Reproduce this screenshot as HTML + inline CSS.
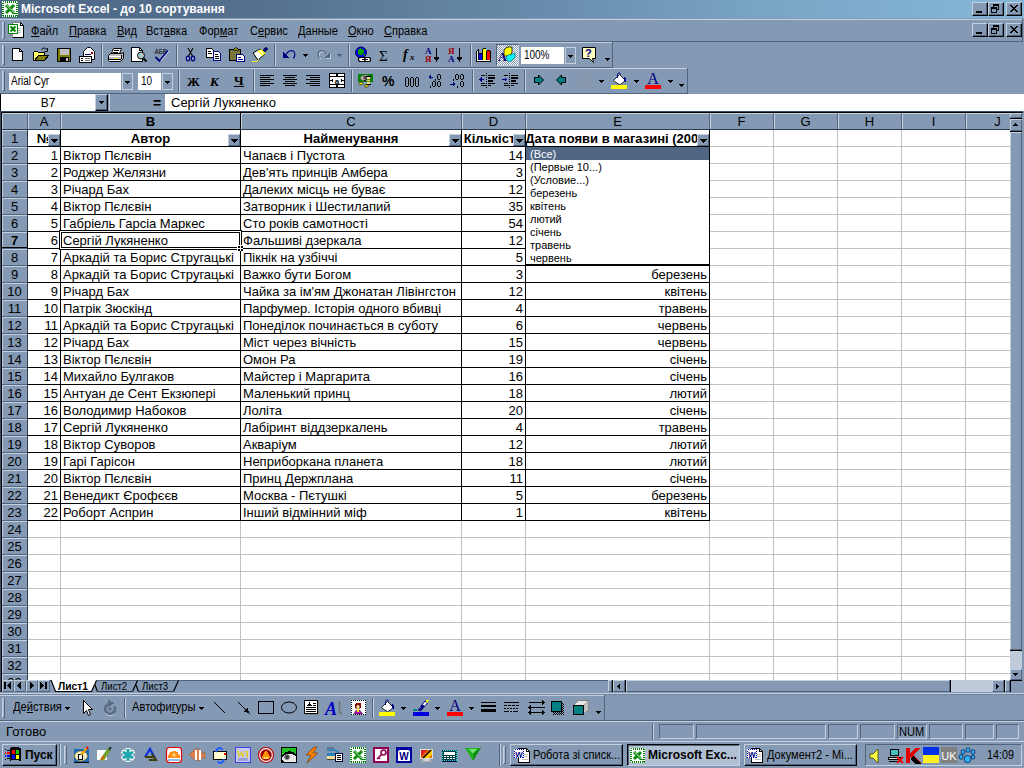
<!DOCTYPE html><html><head><meta charset="utf-8"><title>Microsoft Excel</title><style>
*{box-sizing:border-box;margin:0;padding:0}
html,body{width:1024px;height:768px;overflow:hidden}
body{background:#8499b3;font-family:"Liberation Sans",sans-serif;font-size:13px;color:#000;position:relative;-webkit-font-smoothing:none}
.a{position:absolute}
.t{position:absolute;white-space:nowrap;line-height:1}
.b{font-weight:bold}
.hl{position:absolute;background:#c5d0de}
.sh{position:absolute;background:#52657f}
.bk{position:absolute;background:#000}
.fc{position:absolute;background:#8499b3}
.wh{position:absolute;background:#fff}
.gl{position:absolute;background:#c0c0c0}
.rb{position:absolute;background:#8499b3;border-top:1px solid #c5d0de;border-left:1px solid #c5d0de;border-right:1px solid #52657f;border-bottom:1px solid #52657f}
.sk{position:absolute;border-top:1px solid #52657f;border-left:1px solid #52657f;border-right:1px solid #c5d0de;border-bottom:1px solid #c5d0de}
svg{position:absolute;overflow:visible}
u{text-decoration:underline;text-decoration-thickness:1px;text-underline-offset:1px}
</style></head><body>
<div class="a" style="left:0px;top:0px;width:1024px;height:18px;background:linear-gradient(90deg,#4e6786 0%,#55708f 25%,#6689a8 50%,#7aa5c5 75%,#86b7d8 100%)"></div>
<div class="t" style="top:3px;font-size:12px;left:21px;font-weight:bold;color:#fff;">Microsoft Excel - до 10 сортування</div>
<div class="a" style="left:972px;top:2px;width:16px;height:14px;background:#8499b3;border-top:1px solid #c5d0de;border-left:1px solid #c5d0de;border-right:1px solid #000;border-bottom:1px solid #000"></div>
<div class="sh" style="left:986px;top:3px;width:1px;height:12px;"></div>
<div class="sh" style="left:973px;top:14px;width:14px;height:1px;"></div>
<div class="bk" style="left:976px;top:11px;width:6px;height:2px;"></div>
<div class="a" style="left:988px;top:2px;width:16px;height:14px;background:#8499b3;border-top:1px solid #c5d0de;border-left:1px solid #c5d0de;border-right:1px solid #000;border-bottom:1px solid #000"></div>
<div class="sh" style="left:1002px;top:3px;width:1px;height:12px;"></div>
<div class="sh" style="left:989px;top:14px;width:14px;height:1px;"></div>
<svg style="left:988px;top:2px" width="16" height="14" shape-rendering="crispEdges"><path d="M5 2h6v2h-6zM5 4h1v2h-1zM10 4h1v4h-1zM9 7h1v1h-1zM3 5h6v2h-6zM3 7h1v4h-1zM8 7h1v4h-1zM3 10h6v1h-6z" fill="#000"/></svg>
<div class="a" style="left:1006px;top:2px;width:16px;height:14px;background:#8499b3;border-top:1px solid #c5d0de;border-left:1px solid #c5d0de;border-right:1px solid #000;border-bottom:1px solid #000"></div>
<div class="sh" style="left:1020px;top:3px;width:1px;height:12px;"></div>
<div class="sh" style="left:1007px;top:14px;width:14px;height:1px;"></div>
<svg style="left:1006px;top:2px" width="16" height="14" shape-rendering="crispEdges"><path d="M4 3h2v1h-2zM10 3h2v1h-2zM5 4h2v1h-2zM9 4h2v1h-2zM6 5h4v1h-4zM7 6h2v1h-2zM6 7h4v1h-4zM5 8h2v1h-2zM9 8h2v1h-2zM4 9h2v1h-2zM10 9h2v1h-2z" fill="#000"/></svg>
<div class="hl" style="left:0px;top:19px;width:1022px;height:1px;"></div>
<div class="sh" style="left:0px;top:41px;width:1023px;height:1px;"></div>
<div class="sh" style="left:1022px;top:19px;width:1px;height:23px;"></div>
<div class="hl" style="left:2px;top:22px;width:1px;height:17px;"></div>
<div class="a" style="left:3px;top:22px;width:1px;height:17px;background:#a9b8cd"></div>
<div class="hl" style="left:2px;top:22px;width:2px;height:1px;"></div>
<div class="sh" style="left:4px;top:22px;width:1px;height:17px;"></div>
<div class="sh" style="left:3px;top:38px;width:2px;height:1px;"></div>
<div class="t" style="top:25px;font-size:12px;left:31px;transform:scaleX(.92);transform-origin:0 0;"><u>Ф</u>айл</div>
<div class="t" style="top:25px;font-size:12px;left:69px;transform:scaleX(.92);transform-origin:0 0;"><u>П</u>равка</div>
<div class="t" style="top:25px;font-size:12px;left:117px;transform:scaleX(.92);transform-origin:0 0;"><u>В</u>ид</div>
<div class="t" style="top:25px;font-size:12px;left:146px;transform:scaleX(.92);transform-origin:0 0;">Вст<u>а</u>вка</div>
<div class="t" style="top:25px;font-size:12px;left:199px;transform:scaleX(.92);transform-origin:0 0;">Фор<u>м</u>ат</div>
<div class="t" style="top:25px;font-size:12px;left:250px;transform:scaleX(.92);transform-origin:0 0;">С<u>е</u>рвис</div>
<div class="t" style="top:25px;font-size:12px;left:298px;transform:scaleX(.92);transform-origin:0 0;"><u>Д</u>анные</div>
<div class="t" style="top:25px;font-size:12px;left:348px;transform:scaleX(.92);transform-origin:0 0;"><u>О</u>кно</div>
<div class="t" style="top:25px;font-size:12px;left:384px;transform:scaleX(.92);transform-origin:0 0;"><u>С</u>правка</div>
<div class="a" style="left:972px;top:23px;width:16px;height:14px;background:#8499b3;border-top:1px solid #c5d0de;border-left:1px solid #c5d0de;border-right:1px solid #000;border-bottom:1px solid #000"></div>
<div class="sh" style="left:986px;top:24px;width:1px;height:12px;"></div>
<div class="sh" style="left:973px;top:35px;width:14px;height:1px;"></div>
<div class="bk" style="left:976px;top:32px;width:6px;height:2px;"></div>
<div class="a" style="left:988px;top:23px;width:16px;height:14px;background:#8499b3;border-top:1px solid #c5d0de;border-left:1px solid #c5d0de;border-right:1px solid #000;border-bottom:1px solid #000"></div>
<div class="sh" style="left:1002px;top:24px;width:1px;height:12px;"></div>
<div class="sh" style="left:989px;top:35px;width:14px;height:1px;"></div>
<svg style="left:988px;top:23px" width="16" height="14" shape-rendering="crispEdges"><path d="M5 2h6v2h-6zM5 4h1v2h-1zM10 4h1v4h-1zM9 7h1v1h-1zM3 5h6v2h-6zM3 7h1v4h-1zM8 7h1v4h-1zM3 10h6v1h-6z" fill="#000"/></svg>
<div class="a" style="left:1006px;top:23px;width:16px;height:14px;background:#8499b3;border-top:1px solid #c5d0de;border-left:1px solid #c5d0de;border-right:1px solid #000;border-bottom:1px solid #000"></div>
<div class="sh" style="left:1020px;top:24px;width:1px;height:12px;"></div>
<div class="sh" style="left:1007px;top:35px;width:14px;height:1px;"></div>
<svg style="left:1006px;top:23px" width="16" height="14" shape-rendering="crispEdges"><path d="M4 3h2v1h-2zM10 3h2v1h-2zM5 4h2v1h-2zM9 4h2v1h-2zM6 5h4v1h-4zM7 6h2v1h-2zM6 7h4v1h-4zM5 8h2v1h-2zM9 8h2v1h-2zM4 9h2v1h-2zM10 9h2v1h-2z" fill="#000"/></svg>
<div class="hl" style="left:0px;top:42px;width:612px;height:1px;"></div>
<div class="sh" style="left:0px;top:67px;width:613px;height:1px;"></div>
<div class="sh" style="left:612px;top:42px;width:1px;height:26px;"></div>
<div class="hl" style="left:2px;top:45px;width:1px;height:20px;"></div>
<div class="a" style="left:3px;top:45px;width:1px;height:20px;background:#a9b8cd"></div>
<div class="hl" style="left:2px;top:45px;width:2px;height:1px;"></div>
<div class="sh" style="left:4px;top:45px;width:1px;height:20px;"></div>
<div class="sh" style="left:3px;top:64px;width:2px;height:1px;"></div>
<div class="sh" style="left:101px;top:44px;width:1px;height:22px;"></div>
<div class="hl" style="left:102px;top:44px;width:1px;height:22px;"></div>
<div class="sh" style="left:176px;top:44px;width:1px;height:22px;"></div>
<div class="hl" style="left:177px;top:44px;width:1px;height:22px;"></div>
<div class="sh" style="left:274px;top:44px;width:1px;height:22px;"></div>
<div class="hl" style="left:275px;top:44px;width:1px;height:22px;"></div>
<div class="sh" style="left:348px;top:44px;width:1px;height:22px;"></div>
<div class="hl" style="left:349px;top:44px;width:1px;height:22px;"></div>
<div class="sh" style="left:470px;top:44px;width:1px;height:22px;"></div>
<div class="hl" style="left:471px;top:44px;width:1px;height:22px;"></div>
<div class="wh" style="left:521px;top:47px;width:43px;height:17px;"></div>
<div class="t" style="top:49px;font-size:12px;left:524px;transform:scaleX(.83);transform-origin:0 0;">100%</div>
<div class="a" style="left:565px;top:47px;width:11px;height:17px;border:1px solid #c5d0de"></div>
<div class="a" style="left:568px;top:55px;width:5px;height:1px;background:#000"></div>
<div class="a" style="left:569px;top:56px;width:3px;height:1px;background:#000"></div>
<div class="a" style="left:570px;top:57px;width:1px;height:1px;background:#000"></div>
<div class="a" style="left:605px;top:58px;width:5px;height:1px;background:#000"></div>
<div class="a" style="left:606px;top:59px;width:3px;height:1px;background:#000"></div>
<div class="a" style="left:607px;top:60px;width:1px;height:1px;background:#000"></div>
<div class="a" style="left:303px;top:54px;width:5px;height:1px;background:#000"></div>
<div class="a" style="left:304px;top:55px;width:3px;height:1px;background:#000"></div>
<div class="a" style="left:305px;top:56px;width:1px;height:1px;background:#000"></div>
<div class="a" style="left:337px;top:54px;width:5px;height:1px;background:#52657f"></div>
<div class="a" style="left:338px;top:55px;width:3px;height:1px;background:#52657f"></div>
<div class="a" style="left:339px;top:56px;width:1px;height:1px;background:#52657f"></div>
<div class="a" style="left:496px;top:44px;width:23px;height:22px;background:repeating-conic-gradient(#ffffff 0 25%,#8499b3 0 50%) 0 0/2px 2px;border-top:1px solid #52657f;border-left:1px solid #52657f;border-right:1px solid #c5d0de;border-bottom:1px solid #c5d0de"></div>
<div class="hl" style="left:0px;top:68px;width:687px;height:1px;"></div>
<div class="sh" style="left:0px;top:93px;width:688px;height:1px;"></div>
<div class="sh" style="left:687px;top:68px;width:1px;height:26px;"></div>
<div class="hl" style="left:2px;top:71px;width:1px;height:20px;"></div>
<div class="a" style="left:3px;top:71px;width:1px;height:20px;background:#a9b8cd"></div>
<div class="hl" style="left:2px;top:71px;width:2px;height:1px;"></div>
<div class="sh" style="left:4px;top:71px;width:1px;height:20px;"></div>
<div class="sh" style="left:3px;top:90px;width:2px;height:1px;"></div>
<div class="wh" style="left:9px;top:73px;width:112px;height:17px;"></div>
<div class="t" style="top:75px;font-size:12px;left:11px;transform:scaleX(.83);transform-origin:0 0;">Arial Cyr</div>
<div class="a" style="left:122px;top:73px;width:11px;height:17px;border:1px solid #c5d0de"></div>
<div class="a" style="left:125px;top:81px;width:5px;height:1px;background:#000"></div>
<div class="a" style="left:126px;top:82px;width:3px;height:1px;background:#000"></div>
<div class="a" style="left:127px;top:83px;width:1px;height:1px;background:#000"></div>
<div class="wh" style="left:138px;top:73px;width:23px;height:17px;"></div>
<div class="t" style="top:75px;font-size:12px;left:141px;transform:scaleX(.83);transform-origin:0 0;">10</div>
<div class="a" style="left:162px;top:73px;width:11px;height:17px;border:1px solid #c5d0de"></div>
<div class="a" style="left:165px;top:81px;width:5px;height:1px;background:#000"></div>
<div class="a" style="left:166px;top:82px;width:3px;height:1px;background:#000"></div>
<div class="a" style="left:167px;top:83px;width:1px;height:1px;background:#000"></div>
<div class="sh" style="left:178px;top:70px;width:1px;height:22px;"></div>
<div class="hl" style="left:179px;top:70px;width:1px;height:22px;"></div>
<div class="sh" style="left:253px;top:70px;width:1px;height:22px;"></div>
<div class="hl" style="left:254px;top:70px;width:1px;height:22px;"></div>
<div class="sh" style="left:351px;top:70px;width:1px;height:22px;"></div>
<div class="hl" style="left:352px;top:70px;width:1px;height:22px;"></div>
<div class="sh" style="left:472px;top:70px;width:1px;height:22px;"></div>
<div class="hl" style="left:473px;top:70px;width:1px;height:22px;"></div>
<div class="sh" style="left:524px;top:70px;width:1px;height:22px;"></div>
<div class="hl" style="left:525px;top:70px;width:1px;height:22px;"></div>
<div class="a" style="left:599px;top:80px;width:5px;height:1px;background:#000"></div>
<div class="a" style="left:600px;top:81px;width:3px;height:1px;background:#000"></div>
<div class="a" style="left:601px;top:82px;width:1px;height:1px;background:#000"></div>
<div class="a" style="left:634px;top:80px;width:5px;height:1px;background:#000"></div>
<div class="a" style="left:635px;top:81px;width:3px;height:1px;background:#000"></div>
<div class="a" style="left:636px;top:82px;width:1px;height:1px;background:#000"></div>
<div class="a" style="left:668px;top:80px;width:5px;height:1px;background:#000"></div>
<div class="a" style="left:669px;top:81px;width:3px;height:1px;background:#000"></div>
<div class="a" style="left:670px;top:82px;width:1px;height:1px;background:#000"></div>
<div class="a" style="left:679px;top:84px;width:5px;height:1px;background:#000"></div>
<div class="a" style="left:680px;top:85px;width:3px;height:1px;background:#000"></div>
<div class="a" style="left:681px;top:86px;width:1px;height:1px;background:#000"></div>
<div class="wh" style="left:0px;top:94px;width:95px;height:17px;"></div>
<div class="bk" style="left:0px;top:94px;width:1px;height:17px;"></div>
<div class="t" style="left:18px;width:60px;top:97px;font-size:12px;text-align:center;">B7</div>
<div class="a" style="left:95px;top:94px;width:13px;height:17px;background:#8499b3;border-top:1px solid #c5d0de;border-left:1px solid #c5d0de;border-right:1px solid #000;border-bottom:1px solid #000"></div>
<div class="sh" style="left:106px;top:95px;width:1px;height:15px;"></div>
<div class="sh" style="left:96px;top:109px;width:11px;height:1px;"></div>
<div class="a" style="left:99px;top:101px;width:5px;height:1px;background:#000"></div>
<div class="a" style="left:100px;top:102px;width:3px;height:1px;background:#000"></div>
<div class="a" style="left:101px;top:103px;width:1px;height:1px;background:#000"></div>
<div class="hl" style="left:109px;top:94px;width:1px;height:17px;"></div>
<div class="t" style="top:96px;font-size:14px;left:153px;font-weight:bold;">=</div>
<div class="wh" style="left:165px;top:94px;width:859px;height:17px;"></div>
<div class="t" style="top:96px;font-size:13px;left:171px;">Сергій Лукяненко</div>
<div class="wh" style="left:28px;top:130px;width:982px;height:550px;"></div>
<div class="gl" style="left:28px;top:146px;width:982px;height:1px;"></div>
<div class="gl" style="left:28px;top:163px;width:982px;height:1px;"></div>
<div class="gl" style="left:28px;top:180px;width:982px;height:1px;"></div>
<div class="gl" style="left:28px;top:197px;width:982px;height:1px;"></div>
<div class="gl" style="left:28px;top:214px;width:982px;height:1px;"></div>
<div class="gl" style="left:28px;top:231px;width:982px;height:1px;"></div>
<div class="gl" style="left:28px;top:248px;width:982px;height:1px;"></div>
<div class="gl" style="left:28px;top:265px;width:982px;height:1px;"></div>
<div class="gl" style="left:28px;top:282px;width:982px;height:1px;"></div>
<div class="gl" style="left:28px;top:299px;width:982px;height:1px;"></div>
<div class="gl" style="left:28px;top:316px;width:982px;height:1px;"></div>
<div class="gl" style="left:28px;top:333px;width:982px;height:1px;"></div>
<div class="gl" style="left:28px;top:350px;width:982px;height:1px;"></div>
<div class="gl" style="left:28px;top:367px;width:982px;height:1px;"></div>
<div class="gl" style="left:28px;top:384px;width:982px;height:1px;"></div>
<div class="gl" style="left:28px;top:401px;width:982px;height:1px;"></div>
<div class="gl" style="left:28px;top:418px;width:982px;height:1px;"></div>
<div class="gl" style="left:28px;top:435px;width:982px;height:1px;"></div>
<div class="gl" style="left:28px;top:452px;width:982px;height:1px;"></div>
<div class="gl" style="left:28px;top:469px;width:982px;height:1px;"></div>
<div class="gl" style="left:28px;top:486px;width:982px;height:1px;"></div>
<div class="gl" style="left:28px;top:503px;width:982px;height:1px;"></div>
<div class="gl" style="left:28px;top:520px;width:982px;height:1px;"></div>
<div class="gl" style="left:28px;top:537px;width:982px;height:1px;"></div>
<div class="gl" style="left:28px;top:554px;width:982px;height:1px;"></div>
<div class="gl" style="left:28px;top:571px;width:982px;height:1px;"></div>
<div class="gl" style="left:28px;top:588px;width:982px;height:1px;"></div>
<div class="gl" style="left:28px;top:605px;width:982px;height:1px;"></div>
<div class="gl" style="left:28px;top:622px;width:982px;height:1px;"></div>
<div class="gl" style="left:28px;top:639px;width:982px;height:1px;"></div>
<div class="gl" style="left:28px;top:656px;width:982px;height:1px;"></div>
<div class="gl" style="left:28px;top:673px;width:982px;height:1px;"></div>
<div class="gl" style="left:60px;top:130px;width:1px;height:550px;"></div>
<div class="gl" style="left:240px;top:130px;width:1px;height:550px;"></div>
<div class="gl" style="left:461px;top:130px;width:1px;height:550px;"></div>
<div class="gl" style="left:525px;top:130px;width:1px;height:550px;"></div>
<div class="gl" style="left:709px;top:130px;width:1px;height:550px;"></div>
<div class="gl" style="left:773px;top:130px;width:1px;height:550px;"></div>
<div class="gl" style="left:837px;top:130px;width:1px;height:550px;"></div>
<div class="gl" style="left:901px;top:130px;width:1px;height:550px;"></div>
<div class="gl" style="left:965px;top:130px;width:1px;height:550px;"></div>
<div class="a" style="left:0px;top:111px;width:1023px;height:1px;background:#3d4c63"></div>
<div class="bk" style="left:0px;top:112px;width:1023px;height:1px;"></div>
<div class="a" style="left:0px;top:111px;width:1px;height:581px;background:#3d4c63"></div>
<div class="bk" style="left:1px;top:112px;width:1px;height:580px;"></div>
<div class="fc" style="left:2px;top:113px;width:1008px;height:16px;"></div>
<div class="hl" style="left:2px;top:113px;width:1008px;height:1px;"></div>
<div class="a" style="left:2px;top:129px;width:1008px;height:1px;background:#2c3a50"></div>
<div class="hl" style="left:2px;top:113px;width:1px;height:16px;"></div>
<div class="sh" style="left:27px;top:113px;width:1px;height:16px;"></div>
<div class="hl" style="left:28px;top:113px;width:1px;height:16px;"></div>
<div class="sh" style="left:60px;top:113px;width:1px;height:16px;"></div>
<div class="t" style="left:28px;width:32px;top:115px;font-size:13px;text-align:center;">A</div>
<div class="hl" style="left:61px;top:113px;width:1px;height:16px;"></div>
<div class="sh" style="left:240px;top:113px;width:1px;height:16px;"></div>
<div class="t" style="left:61px;width:179px;top:115px;font-size:13px;text-align:center;font-weight:bold;">B</div>
<div class="hl" style="left:241px;top:113px;width:1px;height:16px;"></div>
<div class="sh" style="left:461px;top:113px;width:1px;height:16px;"></div>
<div class="t" style="left:241px;width:220px;top:115px;font-size:13px;text-align:center;">C</div>
<div class="hl" style="left:462px;top:113px;width:1px;height:16px;"></div>
<div class="sh" style="left:525px;top:113px;width:1px;height:16px;"></div>
<div class="t" style="left:462px;width:63px;top:115px;font-size:13px;text-align:center;">D</div>
<div class="hl" style="left:526px;top:113px;width:1px;height:16px;"></div>
<div class="sh" style="left:709px;top:113px;width:1px;height:16px;"></div>
<div class="t" style="left:526px;width:183px;top:115px;font-size:13px;text-align:center;">E</div>
<div class="hl" style="left:710px;top:113px;width:1px;height:16px;"></div>
<div class="sh" style="left:773px;top:113px;width:1px;height:16px;"></div>
<div class="t" style="left:710px;width:63px;top:115px;font-size:13px;text-align:center;">F</div>
<div class="hl" style="left:774px;top:113px;width:1px;height:16px;"></div>
<div class="sh" style="left:837px;top:113px;width:1px;height:16px;"></div>
<div class="t" style="left:774px;width:63px;top:115px;font-size:13px;text-align:center;">G</div>
<div class="hl" style="left:838px;top:113px;width:1px;height:16px;"></div>
<div class="sh" style="left:901px;top:113px;width:1px;height:16px;"></div>
<div class="t" style="left:838px;width:63px;top:115px;font-size:13px;text-align:center;">H</div>
<div class="hl" style="left:902px;top:113px;width:1px;height:16px;"></div>
<div class="sh" style="left:965px;top:113px;width:1px;height:16px;"></div>
<div class="t" style="left:902px;width:63px;top:115px;font-size:13px;text-align:center;">I</div>
<div class="hl" style="left:966px;top:113px;width:1px;height:16px;"></div>
<div class="t" style="left:966px;width:63px;top:115px;font-size:13px;text-align:center;">J</div>
<div class="fc" style="left:2px;top:130px;width:25px;height:550px;"></div>
<div class="hl" style="left:2px;top:130px;width:1px;height:550px;"></div>
<div class="a" style="left:27px;top:130px;width:1px;height:550px;background:#2c3a50"></div>
<div class="hl" style="left:2px;top:130px;width:25px;height:1px;"></div>
<div class="sh" style="left:2px;top:146px;width:26px;height:1px;"></div>
<div class="t" style="left:2px;width:25px;top:132px;height:14px;overflow:hidden;text-align:center;font-size:13px;">1</div>
<div class="hl" style="left:2px;top:147px;width:25px;height:1px;"></div>
<div class="sh" style="left:2px;top:163px;width:26px;height:1px;"></div>
<div class="t" style="left:2px;width:25px;top:149px;height:14px;overflow:hidden;text-align:center;font-size:13px;">2</div>
<div class="hl" style="left:2px;top:164px;width:25px;height:1px;"></div>
<div class="sh" style="left:2px;top:180px;width:26px;height:1px;"></div>
<div class="t" style="left:2px;width:25px;top:166px;height:14px;overflow:hidden;text-align:center;font-size:13px;">3</div>
<div class="hl" style="left:2px;top:181px;width:25px;height:1px;"></div>
<div class="sh" style="left:2px;top:197px;width:26px;height:1px;"></div>
<div class="t" style="left:2px;width:25px;top:183px;height:14px;overflow:hidden;text-align:center;font-size:13px;">4</div>
<div class="hl" style="left:2px;top:198px;width:25px;height:1px;"></div>
<div class="sh" style="left:2px;top:214px;width:26px;height:1px;"></div>
<div class="t" style="left:2px;width:25px;top:200px;height:14px;overflow:hidden;text-align:center;font-size:13px;">5</div>
<div class="hl" style="left:2px;top:215px;width:25px;height:1px;"></div>
<div class="sh" style="left:2px;top:231px;width:26px;height:1px;"></div>
<div class="t" style="left:2px;width:25px;top:217px;height:14px;overflow:hidden;text-align:center;font-size:13px;">6</div>
<div class="hl" style="left:2px;top:232px;width:25px;height:1px;"></div>
<div class="sh" style="left:2px;top:248px;width:26px;height:1px;"></div>
<div class="t" style="left:2px;width:25px;top:234px;height:14px;overflow:hidden;text-align:center;font-size:13px;font-weight:bold;">7</div>
<div class="hl" style="left:2px;top:249px;width:25px;height:1px;"></div>
<div class="sh" style="left:2px;top:265px;width:26px;height:1px;"></div>
<div class="t" style="left:2px;width:25px;top:251px;height:14px;overflow:hidden;text-align:center;font-size:13px;">8</div>
<div class="hl" style="left:2px;top:266px;width:25px;height:1px;"></div>
<div class="sh" style="left:2px;top:282px;width:26px;height:1px;"></div>
<div class="t" style="left:2px;width:25px;top:268px;height:14px;overflow:hidden;text-align:center;font-size:13px;">9</div>
<div class="hl" style="left:2px;top:283px;width:25px;height:1px;"></div>
<div class="sh" style="left:2px;top:299px;width:26px;height:1px;"></div>
<div class="t" style="left:2px;width:25px;top:285px;height:14px;overflow:hidden;text-align:center;font-size:13px;">10</div>
<div class="hl" style="left:2px;top:300px;width:25px;height:1px;"></div>
<div class="sh" style="left:2px;top:316px;width:26px;height:1px;"></div>
<div class="t" style="left:2px;width:25px;top:302px;height:14px;overflow:hidden;text-align:center;font-size:13px;">11</div>
<div class="hl" style="left:2px;top:317px;width:25px;height:1px;"></div>
<div class="sh" style="left:2px;top:333px;width:26px;height:1px;"></div>
<div class="t" style="left:2px;width:25px;top:319px;height:14px;overflow:hidden;text-align:center;font-size:13px;">12</div>
<div class="hl" style="left:2px;top:334px;width:25px;height:1px;"></div>
<div class="sh" style="left:2px;top:350px;width:26px;height:1px;"></div>
<div class="t" style="left:2px;width:25px;top:336px;height:14px;overflow:hidden;text-align:center;font-size:13px;">13</div>
<div class="hl" style="left:2px;top:351px;width:25px;height:1px;"></div>
<div class="sh" style="left:2px;top:367px;width:26px;height:1px;"></div>
<div class="t" style="left:2px;width:25px;top:353px;height:14px;overflow:hidden;text-align:center;font-size:13px;">14</div>
<div class="hl" style="left:2px;top:368px;width:25px;height:1px;"></div>
<div class="sh" style="left:2px;top:384px;width:26px;height:1px;"></div>
<div class="t" style="left:2px;width:25px;top:370px;height:14px;overflow:hidden;text-align:center;font-size:13px;">15</div>
<div class="hl" style="left:2px;top:385px;width:25px;height:1px;"></div>
<div class="sh" style="left:2px;top:401px;width:26px;height:1px;"></div>
<div class="t" style="left:2px;width:25px;top:387px;height:14px;overflow:hidden;text-align:center;font-size:13px;">16</div>
<div class="hl" style="left:2px;top:402px;width:25px;height:1px;"></div>
<div class="sh" style="left:2px;top:418px;width:26px;height:1px;"></div>
<div class="t" style="left:2px;width:25px;top:404px;height:14px;overflow:hidden;text-align:center;font-size:13px;">17</div>
<div class="hl" style="left:2px;top:419px;width:25px;height:1px;"></div>
<div class="sh" style="left:2px;top:435px;width:26px;height:1px;"></div>
<div class="t" style="left:2px;width:25px;top:421px;height:14px;overflow:hidden;text-align:center;font-size:13px;">18</div>
<div class="hl" style="left:2px;top:436px;width:25px;height:1px;"></div>
<div class="sh" style="left:2px;top:452px;width:26px;height:1px;"></div>
<div class="t" style="left:2px;width:25px;top:438px;height:14px;overflow:hidden;text-align:center;font-size:13px;">19</div>
<div class="hl" style="left:2px;top:453px;width:25px;height:1px;"></div>
<div class="sh" style="left:2px;top:469px;width:26px;height:1px;"></div>
<div class="t" style="left:2px;width:25px;top:455px;height:14px;overflow:hidden;text-align:center;font-size:13px;">20</div>
<div class="hl" style="left:2px;top:470px;width:25px;height:1px;"></div>
<div class="sh" style="left:2px;top:486px;width:26px;height:1px;"></div>
<div class="t" style="left:2px;width:25px;top:472px;height:14px;overflow:hidden;text-align:center;font-size:13px;">21</div>
<div class="hl" style="left:2px;top:487px;width:25px;height:1px;"></div>
<div class="sh" style="left:2px;top:503px;width:26px;height:1px;"></div>
<div class="t" style="left:2px;width:25px;top:489px;height:14px;overflow:hidden;text-align:center;font-size:13px;">22</div>
<div class="hl" style="left:2px;top:504px;width:25px;height:1px;"></div>
<div class="sh" style="left:2px;top:520px;width:26px;height:1px;"></div>
<div class="t" style="left:2px;width:25px;top:506px;height:14px;overflow:hidden;text-align:center;font-size:13px;">23</div>
<div class="hl" style="left:2px;top:521px;width:25px;height:1px;"></div>
<div class="sh" style="left:2px;top:537px;width:26px;height:1px;"></div>
<div class="t" style="left:2px;width:25px;top:523px;height:14px;overflow:hidden;text-align:center;font-size:13px;">24</div>
<div class="hl" style="left:2px;top:538px;width:25px;height:1px;"></div>
<div class="sh" style="left:2px;top:554px;width:26px;height:1px;"></div>
<div class="t" style="left:2px;width:25px;top:540px;height:14px;overflow:hidden;text-align:center;font-size:13px;">25</div>
<div class="hl" style="left:2px;top:555px;width:25px;height:1px;"></div>
<div class="sh" style="left:2px;top:571px;width:26px;height:1px;"></div>
<div class="t" style="left:2px;width:25px;top:557px;height:14px;overflow:hidden;text-align:center;font-size:13px;">26</div>
<div class="hl" style="left:2px;top:572px;width:25px;height:1px;"></div>
<div class="sh" style="left:2px;top:588px;width:26px;height:1px;"></div>
<div class="t" style="left:2px;width:25px;top:574px;height:14px;overflow:hidden;text-align:center;font-size:13px;">27</div>
<div class="hl" style="left:2px;top:589px;width:25px;height:1px;"></div>
<div class="sh" style="left:2px;top:605px;width:26px;height:1px;"></div>
<div class="t" style="left:2px;width:25px;top:591px;height:14px;overflow:hidden;text-align:center;font-size:13px;">28</div>
<div class="hl" style="left:2px;top:606px;width:25px;height:1px;"></div>
<div class="sh" style="left:2px;top:622px;width:26px;height:1px;"></div>
<div class="t" style="left:2px;width:25px;top:608px;height:14px;overflow:hidden;text-align:center;font-size:13px;">29</div>
<div class="hl" style="left:2px;top:623px;width:25px;height:1px;"></div>
<div class="sh" style="left:2px;top:639px;width:26px;height:1px;"></div>
<div class="t" style="left:2px;width:25px;top:625px;height:14px;overflow:hidden;text-align:center;font-size:13px;">30</div>
<div class="hl" style="left:2px;top:640px;width:25px;height:1px;"></div>
<div class="sh" style="left:2px;top:656px;width:26px;height:1px;"></div>
<div class="t" style="left:2px;width:25px;top:642px;height:14px;overflow:hidden;text-align:center;font-size:13px;">31</div>
<div class="hl" style="left:2px;top:657px;width:25px;height:1px;"></div>
<div class="sh" style="left:2px;top:673px;width:26px;height:1px;"></div>
<div class="t" style="left:2px;width:25px;top:659px;height:14px;overflow:hidden;text-align:center;font-size:13px;">32</div>
<div class="hl" style="left:2px;top:674px;width:25px;height:1px;"></div>
<div class="t" style="left:2px;width:25px;top:676px;height:4px;overflow:hidden;text-align:center;font-size:13px;">33</div>
<div class="bk" style="left:27px;top:146px;width:683px;height:1px;"></div>
<div class="bk" style="left:27px;top:163px;width:683px;height:1px;"></div>
<div class="bk" style="left:27px;top:180px;width:683px;height:1px;"></div>
<div class="bk" style="left:27px;top:197px;width:683px;height:1px;"></div>
<div class="bk" style="left:27px;top:214px;width:683px;height:1px;"></div>
<div class="bk" style="left:27px;top:231px;width:683px;height:1px;"></div>
<div class="bk" style="left:27px;top:248px;width:683px;height:1px;"></div>
<div class="bk" style="left:27px;top:265px;width:683px;height:1px;"></div>
<div class="bk" style="left:27px;top:282px;width:683px;height:1px;"></div>
<div class="bk" style="left:27px;top:299px;width:683px;height:1px;"></div>
<div class="bk" style="left:27px;top:316px;width:683px;height:1px;"></div>
<div class="bk" style="left:27px;top:333px;width:683px;height:1px;"></div>
<div class="bk" style="left:27px;top:350px;width:683px;height:1px;"></div>
<div class="bk" style="left:27px;top:367px;width:683px;height:1px;"></div>
<div class="bk" style="left:27px;top:384px;width:683px;height:1px;"></div>
<div class="bk" style="left:27px;top:401px;width:683px;height:1px;"></div>
<div class="bk" style="left:27px;top:418px;width:683px;height:1px;"></div>
<div class="bk" style="left:27px;top:435px;width:683px;height:1px;"></div>
<div class="bk" style="left:27px;top:452px;width:683px;height:1px;"></div>
<div class="bk" style="left:27px;top:469px;width:683px;height:1px;"></div>
<div class="bk" style="left:27px;top:486px;width:683px;height:1px;"></div>
<div class="bk" style="left:27px;top:503px;width:683px;height:1px;"></div>
<div class="bk" style="left:27px;top:520px;width:683px;height:1px;"></div>
<div class="bk" style="left:61px;top:129px;width:180px;height:1px;"></div>
<div class="bk" style="left:240px;top:113px;width:1px;height:17px;"></div>
<div class="bk" style="left:27px;top:231px;width:1px;height:17px;"></div>
<div class="bk" style="left:2px;top:247px;width:26px;height:1px;"></div>
<div class="bk" style="left:60px;top:130px;width:1px;height:391px;"></div>
<div class="bk" style="left:240px;top:130px;width:1px;height:391px;"></div>
<div class="bk" style="left:461px;top:130px;width:1px;height:391px;"></div>
<div class="bk" style="left:525px;top:130px;width:1px;height:391px;"></div>
<div class="bk" style="left:709px;top:130px;width:1px;height:391px;"></div>
<div class="a" style="left:28px;top:130px;width:32px;height:16px;overflow:hidden;"><div class="ct" style="position:absolute;top:2px;white-space:nowrap;line-height:1;font-size:13px;font-weight:bold;left:50%;transform:translateX(-50%);">№</div></div>
<div class="a" style="left:61px;top:130px;width:179px;height:16px;overflow:hidden;"><div class="ct" style="position:absolute;top:2px;white-space:nowrap;line-height:1;font-size:13px;font-weight:bold;left:50%;transform:translateX(-50%);">Автор</div></div>
<div class="a" style="left:241px;top:130px;width:220px;height:16px;overflow:hidden;"><div class="ct" style="position:absolute;top:2px;white-space:nowrap;line-height:1;font-size:13px;font-weight:bold;left:50%;transform:translateX(-50%);">Найменування</div></div>
<div class="a" style="left:462px;top:130px;width:63px;height:16px;overflow:hidden;"><div class="ct" style="position:absolute;top:2px;white-space:nowrap;line-height:1;font-size:13px;font-weight:bold;left:50%;transform:translateX(-50%);">Кількість</div></div>
<div class="a" style="left:526px;top:130px;width:183px;height:16px;overflow:hidden;"><div class="ct" style="position:absolute;top:2px;white-space:nowrap;line-height:1;font-size:13px;font-weight:bold;left:50%;transform:translateX(-50%);">Дата появи в магазині (2005)</div></div>
<div class="a" style="left:48px;top:134px;width:12px;height:12px;background:#8499b3;border-top:1px solid #c5d0de;border-left:1px solid #c5d0de;border-right:1px solid #52657f;border-bottom:1px solid #52657f"></div>
<div class="bk" style="left:51px;top:139px;width:7px;height:1px;"></div>
<div class="bk" style="left:52px;top:140px;width:5px;height:1px;"></div>
<div class="bk" style="left:53px;top:141px;width:3px;height:1px;"></div>
<div class="bk" style="left:54px;top:142px;width:1px;height:1px;"></div>
<div class="a" style="left:228px;top:134px;width:12px;height:12px;background:#8499b3;border-top:1px solid #c5d0de;border-left:1px solid #c5d0de;border-right:1px solid #52657f;border-bottom:1px solid #52657f"></div>
<div class="bk" style="left:231px;top:139px;width:7px;height:1px;"></div>
<div class="bk" style="left:232px;top:140px;width:5px;height:1px;"></div>
<div class="bk" style="left:233px;top:141px;width:3px;height:1px;"></div>
<div class="bk" style="left:234px;top:142px;width:1px;height:1px;"></div>
<div class="a" style="left:449px;top:134px;width:12px;height:12px;background:#8499b3;border-top:1px solid #c5d0de;border-left:1px solid #c5d0de;border-right:1px solid #52657f;border-bottom:1px solid #52657f"></div>
<div class="bk" style="left:452px;top:139px;width:7px;height:1px;"></div>
<div class="bk" style="left:453px;top:140px;width:5px;height:1px;"></div>
<div class="bk" style="left:454px;top:141px;width:3px;height:1px;"></div>
<div class="bk" style="left:455px;top:142px;width:1px;height:1px;"></div>
<div class="a" style="left:513px;top:134px;width:12px;height:12px;background:#8499b3;border-top:1px solid #c5d0de;border-left:1px solid #c5d0de;border-right:1px solid #52657f;border-bottom:1px solid #52657f"></div>
<div class="bk" style="left:516px;top:139px;width:7px;height:1px;"></div>
<div class="bk" style="left:517px;top:140px;width:5px;height:1px;"></div>
<div class="bk" style="left:518px;top:141px;width:3px;height:1px;"></div>
<div class="bk" style="left:519px;top:142px;width:1px;height:1px;"></div>
<div class="a" style="left:697px;top:134px;width:12px;height:12px;background:#8499b3;border-top:1px solid #c5d0de;border-left:1px solid #c5d0de;border-right:1px solid #52657f;border-bottom:1px solid #52657f"></div>
<div class="bk" style="left:700px;top:139px;width:7px;height:1px;"></div>
<div class="bk" style="left:701px;top:140px;width:5px;height:1px;"></div>
<div class="bk" style="left:702px;top:141px;width:3px;height:1px;"></div>
<div class="bk" style="left:703px;top:142px;width:1px;height:1px;"></div>
<div class="a" style="left:28px;top:147px;width:32px;height:16px;overflow:hidden;"><div class="ct" style="position:absolute;top:2px;white-space:nowrap;line-height:1;font-size:13px;right:2px;">1</div></div>
<div class="a" style="left:61px;top:147px;width:179px;height:16px;overflow:hidden;"><div class="ct" style="position:absolute;top:2px;white-space:nowrap;line-height:1;font-size:13px;left:2px;">Віктор Пєлєвін</div></div>
<div class="a" style="left:241px;top:147px;width:220px;height:16px;overflow:hidden;"><div class="ct" style="position:absolute;top:2px;white-space:nowrap;line-height:1;font-size:13px;left:2px;">Чапаєв і Пустота</div></div>
<div class="a" style="left:462px;top:147px;width:63px;height:16px;overflow:hidden;"><div class="ct" style="position:absolute;top:2px;white-space:nowrap;line-height:1;font-size:13px;right:2px;">14</div></div>
<div class="a" style="left:28px;top:164px;width:32px;height:16px;overflow:hidden;"><div class="ct" style="position:absolute;top:2px;white-space:nowrap;line-height:1;font-size:13px;right:2px;">2</div></div>
<div class="a" style="left:61px;top:164px;width:179px;height:16px;overflow:hidden;"><div class="ct" style="position:absolute;top:2px;white-space:nowrap;line-height:1;font-size:13px;left:2px;">Роджер Желязни</div></div>
<div class="a" style="left:241px;top:164px;width:220px;height:16px;overflow:hidden;"><div class="ct" style="position:absolute;top:2px;white-space:nowrap;line-height:1;font-size:13px;left:2px;">Дев'ять принців Амбера</div></div>
<div class="a" style="left:462px;top:164px;width:63px;height:16px;overflow:hidden;"><div class="ct" style="position:absolute;top:2px;white-space:nowrap;line-height:1;font-size:13px;right:2px;">3</div></div>
<div class="a" style="left:28px;top:181px;width:32px;height:16px;overflow:hidden;"><div class="ct" style="position:absolute;top:2px;white-space:nowrap;line-height:1;font-size:13px;right:2px;">3</div></div>
<div class="a" style="left:61px;top:181px;width:179px;height:16px;overflow:hidden;"><div class="ct" style="position:absolute;top:2px;white-space:nowrap;line-height:1;font-size:13px;left:2px;">Річард Бах</div></div>
<div class="a" style="left:241px;top:181px;width:220px;height:16px;overflow:hidden;"><div class="ct" style="position:absolute;top:2px;white-space:nowrap;line-height:1;font-size:13px;left:2px;">Далеких місць не буває</div></div>
<div class="a" style="left:462px;top:181px;width:63px;height:16px;overflow:hidden;"><div class="ct" style="position:absolute;top:2px;white-space:nowrap;line-height:1;font-size:13px;right:2px;">12</div></div>
<div class="a" style="left:28px;top:198px;width:32px;height:16px;overflow:hidden;"><div class="ct" style="position:absolute;top:2px;white-space:nowrap;line-height:1;font-size:13px;right:2px;">4</div></div>
<div class="a" style="left:61px;top:198px;width:179px;height:16px;overflow:hidden;"><div class="ct" style="position:absolute;top:2px;white-space:nowrap;line-height:1;font-size:13px;left:2px;">Віктор Пєлєвін</div></div>
<div class="a" style="left:241px;top:198px;width:220px;height:16px;overflow:hidden;"><div class="ct" style="position:absolute;top:2px;white-space:nowrap;line-height:1;font-size:13px;left:2px;">Затворник і Шестилапий</div></div>
<div class="a" style="left:462px;top:198px;width:63px;height:16px;overflow:hidden;"><div class="ct" style="position:absolute;top:2px;white-space:nowrap;line-height:1;font-size:13px;right:2px;">35</div></div>
<div class="a" style="left:28px;top:215px;width:32px;height:16px;overflow:hidden;"><div class="ct" style="position:absolute;top:2px;white-space:nowrap;line-height:1;font-size:13px;right:2px;">5</div></div>
<div class="a" style="left:61px;top:215px;width:179px;height:16px;overflow:hidden;"><div class="ct" style="position:absolute;top:2px;white-space:nowrap;line-height:1;font-size:13px;left:2px;">Габріель Гарсіа Маркес</div></div>
<div class="a" style="left:241px;top:215px;width:220px;height:16px;overflow:hidden;"><div class="ct" style="position:absolute;top:2px;white-space:nowrap;line-height:1;font-size:13px;left:2px;">Сто років самотності</div></div>
<div class="a" style="left:462px;top:215px;width:63px;height:16px;overflow:hidden;"><div class="ct" style="position:absolute;top:2px;white-space:nowrap;line-height:1;font-size:13px;right:2px;">54</div></div>
<div class="a" style="left:28px;top:232px;width:32px;height:16px;overflow:hidden;"><div class="ct" style="position:absolute;top:2px;white-space:nowrap;line-height:1;font-size:13px;right:2px;">6</div></div>
<div class="a" style="left:61px;top:232px;width:179px;height:16px;overflow:hidden;"><div class="ct" style="position:absolute;top:2px;white-space:nowrap;line-height:1;font-size:13px;left:2px;">Сергій Лукяненко</div></div>
<div class="a" style="left:241px;top:232px;width:220px;height:16px;overflow:hidden;"><div class="ct" style="position:absolute;top:2px;white-space:nowrap;line-height:1;font-size:13px;left:2px;">Фальшиві дзеркала</div></div>
<div class="a" style="left:462px;top:232px;width:63px;height:16px;overflow:hidden;"><div class="ct" style="position:absolute;top:2px;white-space:nowrap;line-height:1;font-size:13px;right:2px;">12</div></div>
<div class="a" style="left:28px;top:249px;width:32px;height:16px;overflow:hidden;"><div class="ct" style="position:absolute;top:2px;white-space:nowrap;line-height:1;font-size:13px;right:2px;">7</div></div>
<div class="a" style="left:61px;top:249px;width:179px;height:16px;overflow:hidden;"><div class="ct" style="position:absolute;top:2px;white-space:nowrap;line-height:1;font-size:13px;left:2px;">Аркадій та Борис Стругацькі</div></div>
<div class="a" style="left:241px;top:249px;width:220px;height:16px;overflow:hidden;"><div class="ct" style="position:absolute;top:2px;white-space:nowrap;line-height:1;font-size:13px;left:2px;">Пікнік на узбіччі</div></div>
<div class="a" style="left:462px;top:249px;width:63px;height:16px;overflow:hidden;"><div class="ct" style="position:absolute;top:2px;white-space:nowrap;line-height:1;font-size:13px;right:2px;">5</div></div>
<div class="a" style="left:28px;top:266px;width:32px;height:16px;overflow:hidden;"><div class="ct" style="position:absolute;top:2px;white-space:nowrap;line-height:1;font-size:13px;right:2px;">8</div></div>
<div class="a" style="left:61px;top:266px;width:179px;height:16px;overflow:hidden;"><div class="ct" style="position:absolute;top:2px;white-space:nowrap;line-height:1;font-size:13px;left:2px;">Аркадій та Борис Стругацькі</div></div>
<div class="a" style="left:241px;top:266px;width:220px;height:16px;overflow:hidden;"><div class="ct" style="position:absolute;top:2px;white-space:nowrap;line-height:1;font-size:13px;left:2px;">Важко бути Богом</div></div>
<div class="a" style="left:462px;top:266px;width:63px;height:16px;overflow:hidden;"><div class="ct" style="position:absolute;top:2px;white-space:nowrap;line-height:1;font-size:13px;right:2px;">3</div></div>
<div class="a" style="left:526px;top:266px;width:183px;height:16px;overflow:hidden;"><div class="ct" style="position:absolute;top:2px;white-space:nowrap;line-height:1;font-size:13px;right:2px;">березень</div></div>
<div class="a" style="left:28px;top:283px;width:32px;height:16px;overflow:hidden;"><div class="ct" style="position:absolute;top:2px;white-space:nowrap;line-height:1;font-size:13px;right:2px;">9</div></div>
<div class="a" style="left:61px;top:283px;width:179px;height:16px;overflow:hidden;"><div class="ct" style="position:absolute;top:2px;white-space:nowrap;line-height:1;font-size:13px;left:2px;">Річард Бах</div></div>
<div class="a" style="left:241px;top:283px;width:220px;height:16px;overflow:hidden;"><div class="ct" style="position:absolute;top:2px;white-space:nowrap;line-height:1;font-size:13px;left:2px;">Чайка за ім'ям Джонатан Лівінгстон</div></div>
<div class="a" style="left:462px;top:283px;width:63px;height:16px;overflow:hidden;"><div class="ct" style="position:absolute;top:2px;white-space:nowrap;line-height:1;font-size:13px;right:2px;">12</div></div>
<div class="a" style="left:526px;top:283px;width:183px;height:16px;overflow:hidden;"><div class="ct" style="position:absolute;top:2px;white-space:nowrap;line-height:1;font-size:13px;right:2px;">квітень</div></div>
<div class="a" style="left:28px;top:300px;width:32px;height:16px;overflow:hidden;"><div class="ct" style="position:absolute;top:2px;white-space:nowrap;line-height:1;font-size:13px;right:2px;">10</div></div>
<div class="a" style="left:61px;top:300px;width:179px;height:16px;overflow:hidden;"><div class="ct" style="position:absolute;top:2px;white-space:nowrap;line-height:1;font-size:13px;left:2px;">Патрік Зюскінд</div></div>
<div class="a" style="left:241px;top:300px;width:220px;height:16px;overflow:hidden;"><div class="ct" style="position:absolute;top:2px;white-space:nowrap;line-height:1;font-size:13px;left:2px;">Парфумер. Історія одного вбивці</div></div>
<div class="a" style="left:462px;top:300px;width:63px;height:16px;overflow:hidden;"><div class="ct" style="position:absolute;top:2px;white-space:nowrap;line-height:1;font-size:13px;right:2px;">4</div></div>
<div class="a" style="left:526px;top:300px;width:183px;height:16px;overflow:hidden;"><div class="ct" style="position:absolute;top:2px;white-space:nowrap;line-height:1;font-size:13px;right:2px;">травень</div></div>
<div class="a" style="left:28px;top:317px;width:32px;height:16px;overflow:hidden;"><div class="ct" style="position:absolute;top:2px;white-space:nowrap;line-height:1;font-size:13px;right:2px;">11</div></div>
<div class="a" style="left:61px;top:317px;width:179px;height:16px;overflow:hidden;"><div class="ct" style="position:absolute;top:2px;white-space:nowrap;line-height:1;font-size:13px;left:2px;">Аркадій та Борис Стругацькі</div></div>
<div class="a" style="left:241px;top:317px;width:220px;height:16px;overflow:hidden;"><div class="ct" style="position:absolute;top:2px;white-space:nowrap;line-height:1;font-size:13px;left:2px;">Понеділок починається в суботу</div></div>
<div class="a" style="left:462px;top:317px;width:63px;height:16px;overflow:hidden;"><div class="ct" style="position:absolute;top:2px;white-space:nowrap;line-height:1;font-size:13px;right:2px;">6</div></div>
<div class="a" style="left:526px;top:317px;width:183px;height:16px;overflow:hidden;"><div class="ct" style="position:absolute;top:2px;white-space:nowrap;line-height:1;font-size:13px;right:2px;">червень</div></div>
<div class="a" style="left:28px;top:334px;width:32px;height:16px;overflow:hidden;"><div class="ct" style="position:absolute;top:2px;white-space:nowrap;line-height:1;font-size:13px;right:2px;">12</div></div>
<div class="a" style="left:61px;top:334px;width:179px;height:16px;overflow:hidden;"><div class="ct" style="position:absolute;top:2px;white-space:nowrap;line-height:1;font-size:13px;left:2px;">Річард Бах</div></div>
<div class="a" style="left:241px;top:334px;width:220px;height:16px;overflow:hidden;"><div class="ct" style="position:absolute;top:2px;white-space:nowrap;line-height:1;font-size:13px;left:2px;">Міст через вічність</div></div>
<div class="a" style="left:462px;top:334px;width:63px;height:16px;overflow:hidden;"><div class="ct" style="position:absolute;top:2px;white-space:nowrap;line-height:1;font-size:13px;right:2px;">15</div></div>
<div class="a" style="left:526px;top:334px;width:183px;height:16px;overflow:hidden;"><div class="ct" style="position:absolute;top:2px;white-space:nowrap;line-height:1;font-size:13px;right:2px;">червень</div></div>
<div class="a" style="left:28px;top:351px;width:32px;height:16px;overflow:hidden;"><div class="ct" style="position:absolute;top:2px;white-space:nowrap;line-height:1;font-size:13px;right:2px;">13</div></div>
<div class="a" style="left:61px;top:351px;width:179px;height:16px;overflow:hidden;"><div class="ct" style="position:absolute;top:2px;white-space:nowrap;line-height:1;font-size:13px;left:2px;">Віктор Пєлєвін</div></div>
<div class="a" style="left:241px;top:351px;width:220px;height:16px;overflow:hidden;"><div class="ct" style="position:absolute;top:2px;white-space:nowrap;line-height:1;font-size:13px;left:2px;">Омон Ра</div></div>
<div class="a" style="left:462px;top:351px;width:63px;height:16px;overflow:hidden;"><div class="ct" style="position:absolute;top:2px;white-space:nowrap;line-height:1;font-size:13px;right:2px;">19</div></div>
<div class="a" style="left:526px;top:351px;width:183px;height:16px;overflow:hidden;"><div class="ct" style="position:absolute;top:2px;white-space:nowrap;line-height:1;font-size:13px;right:2px;">січень</div></div>
<div class="a" style="left:28px;top:368px;width:32px;height:16px;overflow:hidden;"><div class="ct" style="position:absolute;top:2px;white-space:nowrap;line-height:1;font-size:13px;right:2px;">14</div></div>
<div class="a" style="left:61px;top:368px;width:179px;height:16px;overflow:hidden;"><div class="ct" style="position:absolute;top:2px;white-space:nowrap;line-height:1;font-size:13px;left:2px;">Михайло Булгаков</div></div>
<div class="a" style="left:241px;top:368px;width:220px;height:16px;overflow:hidden;"><div class="ct" style="position:absolute;top:2px;white-space:nowrap;line-height:1;font-size:13px;left:2px;">Майстер і Маргарита</div></div>
<div class="a" style="left:462px;top:368px;width:63px;height:16px;overflow:hidden;"><div class="ct" style="position:absolute;top:2px;white-space:nowrap;line-height:1;font-size:13px;right:2px;">16</div></div>
<div class="a" style="left:526px;top:368px;width:183px;height:16px;overflow:hidden;"><div class="ct" style="position:absolute;top:2px;white-space:nowrap;line-height:1;font-size:13px;right:2px;">січень</div></div>
<div class="a" style="left:28px;top:385px;width:32px;height:16px;overflow:hidden;"><div class="ct" style="position:absolute;top:2px;white-space:nowrap;line-height:1;font-size:13px;right:2px;">15</div></div>
<div class="a" style="left:61px;top:385px;width:179px;height:16px;overflow:hidden;"><div class="ct" style="position:absolute;top:2px;white-space:nowrap;line-height:1;font-size:13px;left:2px;">Антуан де Сент Екзюпері</div></div>
<div class="a" style="left:241px;top:385px;width:220px;height:16px;overflow:hidden;"><div class="ct" style="position:absolute;top:2px;white-space:nowrap;line-height:1;font-size:13px;left:2px;">Маленький принц</div></div>
<div class="a" style="left:462px;top:385px;width:63px;height:16px;overflow:hidden;"><div class="ct" style="position:absolute;top:2px;white-space:nowrap;line-height:1;font-size:13px;right:2px;">18</div></div>
<div class="a" style="left:526px;top:385px;width:183px;height:16px;overflow:hidden;"><div class="ct" style="position:absolute;top:2px;white-space:nowrap;line-height:1;font-size:13px;right:2px;">лютий</div></div>
<div class="a" style="left:28px;top:402px;width:32px;height:16px;overflow:hidden;"><div class="ct" style="position:absolute;top:2px;white-space:nowrap;line-height:1;font-size:13px;right:2px;">16</div></div>
<div class="a" style="left:61px;top:402px;width:179px;height:16px;overflow:hidden;"><div class="ct" style="position:absolute;top:2px;white-space:nowrap;line-height:1;font-size:13px;left:2px;">Володимир Набоков</div></div>
<div class="a" style="left:241px;top:402px;width:220px;height:16px;overflow:hidden;"><div class="ct" style="position:absolute;top:2px;white-space:nowrap;line-height:1;font-size:13px;left:2px;">Лоліта</div></div>
<div class="a" style="left:462px;top:402px;width:63px;height:16px;overflow:hidden;"><div class="ct" style="position:absolute;top:2px;white-space:nowrap;line-height:1;font-size:13px;right:2px;">20</div></div>
<div class="a" style="left:526px;top:402px;width:183px;height:16px;overflow:hidden;"><div class="ct" style="position:absolute;top:2px;white-space:nowrap;line-height:1;font-size:13px;right:2px;">січень</div></div>
<div class="a" style="left:28px;top:419px;width:32px;height:16px;overflow:hidden;"><div class="ct" style="position:absolute;top:2px;white-space:nowrap;line-height:1;font-size:13px;right:2px;">17</div></div>
<div class="a" style="left:61px;top:419px;width:179px;height:16px;overflow:hidden;"><div class="ct" style="position:absolute;top:2px;white-space:nowrap;line-height:1;font-size:13px;left:2px;">Сергій Лукяненко</div></div>
<div class="a" style="left:241px;top:419px;width:220px;height:16px;overflow:hidden;"><div class="ct" style="position:absolute;top:2px;white-space:nowrap;line-height:1;font-size:13px;left:2px;">Лабіринт віддзеркалень</div></div>
<div class="a" style="left:462px;top:419px;width:63px;height:16px;overflow:hidden;"><div class="ct" style="position:absolute;top:2px;white-space:nowrap;line-height:1;font-size:13px;right:2px;">4</div></div>
<div class="a" style="left:526px;top:419px;width:183px;height:16px;overflow:hidden;"><div class="ct" style="position:absolute;top:2px;white-space:nowrap;line-height:1;font-size:13px;right:2px;">травень</div></div>
<div class="a" style="left:28px;top:436px;width:32px;height:16px;overflow:hidden;"><div class="ct" style="position:absolute;top:2px;white-space:nowrap;line-height:1;font-size:13px;right:2px;">18</div></div>
<div class="a" style="left:61px;top:436px;width:179px;height:16px;overflow:hidden;"><div class="ct" style="position:absolute;top:2px;white-space:nowrap;line-height:1;font-size:13px;left:2px;">Віктор Суворов</div></div>
<div class="a" style="left:241px;top:436px;width:220px;height:16px;overflow:hidden;"><div class="ct" style="position:absolute;top:2px;white-space:nowrap;line-height:1;font-size:13px;left:2px;">Акваріум</div></div>
<div class="a" style="left:462px;top:436px;width:63px;height:16px;overflow:hidden;"><div class="ct" style="position:absolute;top:2px;white-space:nowrap;line-height:1;font-size:13px;right:2px;">12</div></div>
<div class="a" style="left:526px;top:436px;width:183px;height:16px;overflow:hidden;"><div class="ct" style="position:absolute;top:2px;white-space:nowrap;line-height:1;font-size:13px;right:2px;">лютий</div></div>
<div class="a" style="left:28px;top:453px;width:32px;height:16px;overflow:hidden;"><div class="ct" style="position:absolute;top:2px;white-space:nowrap;line-height:1;font-size:13px;right:2px;">19</div></div>
<div class="a" style="left:61px;top:453px;width:179px;height:16px;overflow:hidden;"><div class="ct" style="position:absolute;top:2px;white-space:nowrap;line-height:1;font-size:13px;left:2px;">Гарі Гарісон</div></div>
<div class="a" style="left:241px;top:453px;width:220px;height:16px;overflow:hidden;"><div class="ct" style="position:absolute;top:2px;white-space:nowrap;line-height:1;font-size:13px;left:2px;">Неприборкана планета</div></div>
<div class="a" style="left:462px;top:453px;width:63px;height:16px;overflow:hidden;"><div class="ct" style="position:absolute;top:2px;white-space:nowrap;line-height:1;font-size:13px;right:2px;">18</div></div>
<div class="a" style="left:526px;top:453px;width:183px;height:16px;overflow:hidden;"><div class="ct" style="position:absolute;top:2px;white-space:nowrap;line-height:1;font-size:13px;right:2px;">лютий</div></div>
<div class="a" style="left:28px;top:470px;width:32px;height:16px;overflow:hidden;"><div class="ct" style="position:absolute;top:2px;white-space:nowrap;line-height:1;font-size:13px;right:2px;">20</div></div>
<div class="a" style="left:61px;top:470px;width:179px;height:16px;overflow:hidden;"><div class="ct" style="position:absolute;top:2px;white-space:nowrap;line-height:1;font-size:13px;left:2px;">Віктор Пєлєвін</div></div>
<div class="a" style="left:241px;top:470px;width:220px;height:16px;overflow:hidden;"><div class="ct" style="position:absolute;top:2px;white-space:nowrap;line-height:1;font-size:13px;left:2px;">Принц Держплана</div></div>
<div class="a" style="left:462px;top:470px;width:63px;height:16px;overflow:hidden;"><div class="ct" style="position:absolute;top:2px;white-space:nowrap;line-height:1;font-size:13px;right:2px;">11</div></div>
<div class="a" style="left:526px;top:470px;width:183px;height:16px;overflow:hidden;"><div class="ct" style="position:absolute;top:2px;white-space:nowrap;line-height:1;font-size:13px;right:2px;">січень</div></div>
<div class="a" style="left:28px;top:487px;width:32px;height:16px;overflow:hidden;"><div class="ct" style="position:absolute;top:2px;white-space:nowrap;line-height:1;font-size:13px;right:2px;">21</div></div>
<div class="a" style="left:61px;top:487px;width:179px;height:16px;overflow:hidden;"><div class="ct" style="position:absolute;top:2px;white-space:nowrap;line-height:1;font-size:13px;left:2px;">Венедикт Єрофєєв</div></div>
<div class="a" style="left:241px;top:487px;width:220px;height:16px;overflow:hidden;"><div class="ct" style="position:absolute;top:2px;white-space:nowrap;line-height:1;font-size:13px;left:2px;">Москва - Пєтушкі</div></div>
<div class="a" style="left:462px;top:487px;width:63px;height:16px;overflow:hidden;"><div class="ct" style="position:absolute;top:2px;white-space:nowrap;line-height:1;font-size:13px;right:2px;">5</div></div>
<div class="a" style="left:526px;top:487px;width:183px;height:16px;overflow:hidden;"><div class="ct" style="position:absolute;top:2px;white-space:nowrap;line-height:1;font-size:13px;right:2px;">березень</div></div>
<div class="a" style="left:28px;top:504px;width:32px;height:16px;overflow:hidden;"><div class="ct" style="position:absolute;top:2px;white-space:nowrap;line-height:1;font-size:13px;right:2px;">22</div></div>
<div class="a" style="left:61px;top:504px;width:179px;height:16px;overflow:hidden;"><div class="ct" style="position:absolute;top:2px;white-space:nowrap;line-height:1;font-size:13px;left:2px;">Роборт Асприн</div></div>
<div class="a" style="left:241px;top:504px;width:220px;height:16px;overflow:hidden;"><div class="ct" style="position:absolute;top:2px;white-space:nowrap;line-height:1;font-size:13px;left:2px;">Інший відмінний міф</div></div>
<div class="a" style="left:462px;top:504px;width:63px;height:16px;overflow:hidden;"><div class="ct" style="position:absolute;top:2px;white-space:nowrap;line-height:1;font-size:13px;right:2px;">1</div></div>
<div class="a" style="left:526px;top:504px;width:183px;height:16px;overflow:hidden;"><div class="ct" style="position:absolute;top:2px;white-space:nowrap;line-height:1;font-size:13px;right:2px;">квітень</div></div>
<div class="bk" style="left:59px;top:230px;width:183px;height:1px;"></div>
<div class="bk" style="left:59px;top:249px;width:181px;height:1px;"></div>
<div class="bk" style="left:59px;top:230px;width:1px;height:20px;"></div>
<div class="bk" style="left:241px;top:230px;width:1px;height:18px;"></div>
<div class="wh" style="left:60px;top:231px;width:181px;height:1px;"></div>
<div class="wh" style="left:60px;top:248px;width:179px;height:1px;"></div>
<div class="wh" style="left:60px;top:231px;width:1px;height:18px;"></div>
<div class="wh" style="left:240px;top:231px;width:1px;height:16px;"></div>
<div class="bk" style="left:61px;top:232px;width:179px;height:1px;"></div>
<div class="bk" style="left:61px;top:247px;width:178px;height:1px;"></div>
<div class="bk" style="left:61px;top:232px;width:1px;height:16px;"></div>
<div class="bk" style="left:239px;top:232px;width:1px;height:15px;"></div>
<div class="wh" style="left:237px;top:245px;width:7px;height:7px;"></div>
<div class="bk" style="left:238px;top:246px;width:5px;height:5px;"></div>
<div class="wh" style="left:240px;top:246px;width:1px;height:5px;"></div>
<div class="wh" style="left:238px;top:248px;width:5px;height:1px;"></div>
<div class="bk" style="left:240px;top:251px;width:1px;height:1px;"></div>
<div class="bk" style="left:243px;top:248px;width:1px;height:1px;"></div>
<div class="wh" style="left:526px;top:147px;width:183px;height:117px;"></div>
<div class="bk" style="left:525px;top:146px;width:185px;height:1px;"></div>
<div class="bk" style="left:525px;top:264px;width:185px;height:1px;"></div>
<div class="bk" style="left:709px;top:146px;width:1px;height:119px;"></div>
<div class="bk" style="left:525px;top:146px;width:1px;height:119px;"></div>
<div class="a" style="left:526px;top:147px;width:183px;height:13px;background:#4f6784"></div>
<div class="t" style="top:149px;font-size:11px;left:530px;color:#fff;">(Все)</div>
<div class="t" style="top:162px;font-size:11px;left:530px;">(Первые 10...)</div>
<div class="t" style="top:175px;font-size:11px;left:530px;">(Условие...)</div>
<div class="t" style="top:188px;font-size:11px;left:530px;">березень</div>
<div class="t" style="top:201px;font-size:11px;left:530px;">квітень</div>
<div class="t" style="top:214px;font-size:11px;left:530px;">лютий</div>
<div class="t" style="top:227px;font-size:11px;left:530px;">січень</div>
<div class="t" style="top:240px;font-size:11px;left:530px;">травень</div>
<div class="t" style="top:253px;font-size:11px;left:530px;">червень</div>
<div class="fc" style="left:1010px;top:113px;width:12px;height:567px;"></div>
<div class="rb" style="left:1010px;top:113px;width:12px;height:5px;"></div>
<div class="bk" style="left:1010px;top:118px;width:12px;height:1px;"></div>
<div class="rb" style="left:1010px;top:119px;width:12px;height:12px;"></div>
<div class="bk" style="left:1010px;top:131px;width:12px;height:1px;"></div>
<div class="bk" style="left:1015px;top:123px;width:1px;height:1px;"></div>
<div class="bk" style="left:1014px;top:124px;width:3px;height:1px;"></div>
<div class="bk" style="left:1013px;top:125px;width:5px;height:1px;"></div>
<div class="rb" style="left:1010px;top:132px;width:12px;height:518px;"></div>
<div class="bk" style="left:1010px;top:650px;width:12px;height:1px;"></div>
<div class="a" style="left:1010px;top:651px;width:12px;height:18px;background:#bfcbda"></div>
<div class="rb" style="left:1010px;top:669px;width:12px;height:11px;"></div>
<div class="bk" style="left:1013px;top:673px;width:5px;height:1px;"></div>
<div class="bk" style="left:1014px;top:674px;width:3px;height:1px;"></div>
<div class="bk" style="left:1015px;top:675px;width:1px;height:1px;"></div>
<div class="fc" style="left:2px;top:680px;width:1008px;height:12px;"></div>
<div class="a" style="left:50px;top:680px;width:558px;height:1px;background:#52657f"></div>
<div class="a" style="left:2px;top:680px;width:12px;height:12px;background:#8499b3;border-top:1px solid #c5d0de;border-left:1px solid #c5d0de;border-right:1px solid #52657f;border-bottom:1px solid #52657f"></div>
<div class="bk" style="left:7px;top:685px;width:1px;height:1px;"></div>
<div class="bk" style="left:8px;top:684px;width:1px;height:3px;"></div>
<div class="bk" style="left:9px;top:683px;width:1px;height:5px;"></div>
<div class="bk" style="left:10px;top:682px;width:1px;height:7px;"></div>
<div class="bk" style="left:4px;top:682px;width:2px;height:7px;"></div>
<div class="a" style="left:14px;top:680px;width:12px;height:12px;background:#8499b3;border-top:1px solid #c5d0de;border-left:1px solid #c5d0de;border-right:1px solid #52657f;border-bottom:1px solid #52657f"></div>
<div class="bk" style="left:17px;top:685px;width:1px;height:1px;"></div>
<div class="bk" style="left:18px;top:684px;width:1px;height:3px;"></div>
<div class="bk" style="left:19px;top:683px;width:1px;height:5px;"></div>
<div class="bk" style="left:20px;top:682px;width:1px;height:7px;"></div>
<div class="a" style="left:26px;top:680px;width:12px;height:12px;background:#8499b3;border-top:1px solid #c5d0de;border-left:1px solid #c5d0de;border-right:1px solid #52657f;border-bottom:1px solid #52657f"></div>
<div class="bk" style="left:33px;top:685px;width:1px;height:1px;"></div>
<div class="bk" style="left:32px;top:684px;width:1px;height:3px;"></div>
<div class="bk" style="left:31px;top:683px;width:1px;height:5px;"></div>
<div class="bk" style="left:30px;top:682px;width:1px;height:7px;"></div>
<div class="a" style="left:38px;top:680px;width:12px;height:12px;background:#8499b3;border-top:1px solid #c5d0de;border-left:1px solid #c5d0de;border-right:1px solid #52657f;border-bottom:1px solid #52657f"></div>
<div class="bk" style="left:43px;top:685px;width:1px;height:1px;"></div>
<div class="bk" style="left:42px;top:684px;width:1px;height:3px;"></div>
<div class="bk" style="left:41px;top:683px;width:1px;height:5px;"></div>
<div class="bk" style="left:40px;top:682px;width:1px;height:7px;"></div>
<div class="bk" style="left:45px;top:682px;width:2px;height:7px;"></div>
<svg style="left:0px;top:680px" width="200" height="12"><path d="M51 0 L55.5 11.5 L91.5 11.5 L96.5 0 Z" fill="#fff"/><path d="M51 0 L55.5 11.5 H91.5 L96.5 0.5" stroke="#000" stroke-width="1.2" fill="none"/><path d="M95 5 L97.5 11.5 M132.5 11.5 L137.5 0.5 M136 5 L138.5 11.5 M173.5 11.5 L178.5 0.5" stroke="#000" stroke-width="1.2" fill="none"/><path d="M97.5 11.5 H132.5 M138.5 11.5 H173.5" stroke="#2c3a50" stroke-width="1" fill="none"/></svg>
<div class="t" style="top:681px;font-size:11px;left:58px;font-weight:bold;transform:scaleX(.93);transform-origin:0 0;">Лист1</div>
<div class="t" style="top:681px;font-size:11px;left:101px;transform:scaleX(.87);transform-origin:0 0;">Лист2</div>
<div class="t" style="top:681px;font-size:11px;left:142px;transform:scaleX(.87);transform-origin:0 0;">Лист3</div>
<div class="rb" style="left:608px;top:680px;width:4px;height:12px;"></div>
<div class="bk" style="left:612px;top:680px;width:1px;height:12px;"></div>
<div class="rb" style="left:613px;top:680px;width:12px;height:12px;"></div>
<div class="bk" style="left:625px;top:680px;width:1px;height:12px;"></div>
<div class="bk" style="left:617px;top:686px;width:1px;height:1px;"></div>
<div class="bk" style="left:618px;top:685px;width:1px;height:3px;"></div>
<div class="bk" style="left:619px;top:684px;width:1px;height:5px;"></div>
<div class="rb" style="left:626px;top:680px;width:324px;height:12px;"></div>
<div class="bk" style="left:950px;top:680px;width:1px;height:12px;"></div>
<div class="a" style="left:951px;top:680px;width:41px;height:12px;background:#bfcbda"></div>
<div class="rb" style="left:992px;top:680px;width:12px;height:12px;"></div>
<div class="bk" style="left:1004px;top:680px;width:1px;height:12px;"></div>
<div class="bk" style="left:998px;top:686px;width:1px;height:1px;"></div>
<div class="bk" style="left:997px;top:685px;width:1px;height:3px;"></div>
<div class="bk" style="left:996px;top:684px;width:1px;height:5px;"></div>
<div class="rb" style="left:1005px;top:680px;width:5px;height:12px;"></div>
<div class="bk" style="left:1010px;top:680px;width:1px;height:12px;"></div>
<div class="bk" style="left:1010px;top:680px;width:12px;height:1px;"></div>
<div class="fc" style="left:1011px;top:681px;width:11px;height:11px;"></div>
<div class="hl" style="left:0px;top:693px;width:1024px;height:1px;"></div>
<div class="a" style="left:0px;top:694px;width:1024px;height:1px;background:#6e84a2"></div>
<div class="hl" style="left:0px;top:695px;width:604px;height:1px;"></div>
<div class="sh" style="left:0px;top:720px;width:1024px;height:1px;"></div>
<div class="sh" style="left:604px;top:695px;width:1px;height:26px;"></div>
<div class="hl" style="left:0px;top:721px;width:1024px;height:1px;"></div>
<div class="hl" style="left:2px;top:698px;width:1px;height:20px;"></div>
<div class="a" style="left:3px;top:698px;width:1px;height:20px;background:#a9b8cd"></div>
<div class="hl" style="left:2px;top:698px;width:2px;height:1px;"></div>
<div class="sh" style="left:4px;top:698px;width:1px;height:20px;"></div>
<div class="sh" style="left:3px;top:717px;width:2px;height:1px;"></div>
<div class="t" style="top:701px;font-size:12px;left:13px;transform:scaleX(.93);transform-origin:0 0;">Де<u>й</u>ствия</div>
<div class="a" style="left:65px;top:707px;width:5px;height:1px;background:#000"></div>
<div class="a" style="left:66px;top:708px;width:3px;height:1px;background:#000"></div>
<div class="a" style="left:67px;top:709px;width:1px;height:1px;background:#000"></div>
<div class="sh" style="left:124px;top:698px;width:1px;height:20px;"></div>
<div class="hl" style="left:125px;top:698px;width:1px;height:20px;"></div>
<div class="t" style="top:701px;font-size:12px;left:132px;transform:scaleX(.93);transform-origin:0 0;">Автофи<u>г</u>уры</div>
<div class="a" style="left:199px;top:707px;width:5px;height:1px;background:#000"></div>
<div class="a" style="left:200px;top:708px;width:3px;height:1px;background:#000"></div>
<div class="a" style="left:201px;top:709px;width:1px;height:1px;background:#000"></div>
<div class="sh" style="left:372px;top:698px;width:1px;height:20px;"></div>
<div class="hl" style="left:373px;top:698px;width:1px;height:20px;"></div>
<div class="a" style="left:401px;top:707px;width:5px;height:1px;background:#000"></div>
<div class="a" style="left:402px;top:708px;width:3px;height:1px;background:#000"></div>
<div class="a" style="left:403px;top:709px;width:1px;height:1px;background:#000"></div>
<div class="a" style="left:435px;top:707px;width:5px;height:1px;background:#000"></div>
<div class="a" style="left:436px;top:708px;width:3px;height:1px;background:#000"></div>
<div class="a" style="left:437px;top:709px;width:1px;height:1px;background:#000"></div>
<div class="a" style="left:469px;top:707px;width:5px;height:1px;background:#000"></div>
<div class="a" style="left:470px;top:708px;width:3px;height:1px;background:#000"></div>
<div class="a" style="left:471px;top:709px;width:1px;height:1px;background:#000"></div>
<div class="a" style="left:596px;top:711px;width:5px;height:1px;background:#000"></div>
<div class="a" style="left:597px;top:712px;width:3px;height:1px;background:#000"></div>
<div class="a" style="left:598px;top:713px;width:1px;height:1px;background:#000"></div>
<div class="t" style="top:725px;font-size:13px;left:6px;">Готово</div>
<div class="sh" style="left:652px;top:723px;width:1px;height:17px;"></div>
<div class="hl" style="left:653px;top:723px;width:1px;height:17px;"></div>
<div class="sk" style="left:659px;top:724px;width:35px;height:15px;"></div>
<div class="sk" style="left:696px;top:724px;width:130px;height:15px;"></div>
<div class="sk" style="left:828px;top:724px;width:30px;height:15px;"></div>
<div class="sk" style="left:860px;top:724px;width:35px;height:15px;"></div>
<div class="sk" style="left:897px;top:724px;width:30px;height:15px;"></div>
<div class="sk" style="left:929px;top:724px;width:34px;height:15px;"></div>
<div class="sk" style="left:965px;top:724px;width:29px;height:15px;"></div>
<div class="sk" style="left:996px;top:724px;width:23px;height:15px;"></div>
<div class="t" style="top:726px;font-size:12px;left:899px;transform:scaleX(.92);transform-origin:0 0;">NUM</div>
<div class="hl" style="left:0px;top:741px;width:1024px;height:1px;"></div>
<div class="a" style="left:2px;top:744px;width:55px;height:22px;background:#8499b3;border-top:1px solid #c5d0de;border-left:1px solid #c5d0de;border-right:1px solid #000;border-bottom:1px solid #000"></div>
<div class="sh" style="left:3px;top:764px;width:53px;height:1px;"></div>
<div class="sh" style="left:55px;top:745px;width:1px;height:20px;"></div>
<div class="t" style="top:748px;font-size:13px;left:25px;font-weight:bold;transform:scaleX(.92);transform-origin:0 0;">Пуск</div>
<div class="sh" style="left:59px;top:744px;width:1px;height:22px;"></div>
<div class="hl" style="left:60px;top:744px;width:1px;height:22px;"></div>
<div class="hl" style="left:64px;top:746px;width:1px;height:18px;"></div>
<div class="a" style="left:65px;top:746px;width:1px;height:18px;background:#a9b8cd"></div>
<div class="hl" style="left:64px;top:746px;width:2px;height:1px;"></div>
<div class="sh" style="left:66px;top:746px;width:1px;height:18px;"></div>
<div class="sh" style="left:65px;top:763px;width:2px;height:1px;"></div>
<div class="sh" style="left:499px;top:744px;width:1px;height:22px;"></div>
<div class="hl" style="left:500px;top:744px;width:1px;height:22px;"></div>
<div class="hl" style="left:503px;top:746px;width:1px;height:18px;"></div>
<div class="a" style="left:504px;top:746px;width:1px;height:18px;background:#a9b8cd"></div>
<div class="hl" style="left:503px;top:746px;width:2px;height:1px;"></div>
<div class="sh" style="left:505px;top:746px;width:1px;height:18px;"></div>
<div class="sh" style="left:504px;top:763px;width:2px;height:1px;"></div>
<div class="a" style="left:510px;top:744px;width:113px;height:22px;background:#8499b3;border-top:1px solid #c5d0de;border-left:1px solid #c5d0de;border-right:1px solid #000;border-bottom:1px solid #000"></div>
<div class="sh" style="left:511px;top:764px;width:111px;height:1px;"></div>
<div class="sh" style="left:621px;top:745px;width:1px;height:20px;"></div>
<div class="t" style="top:748px;font-size:13px;left:533px;transform:scaleX(.85);transform-origin:0 0;">Робота зі списк...</div>
<div class="a" style="left:627px;top:744px;width:113px;height:22px;background:#b2c0d3;border-top:1px solid #000;border-left:1px solid #000;border-right:1px solid #c5d0de;border-bottom:1px solid #c5d0de"></div>
<div class="sh" style="left:628px;top:745px;width:111px;height:1px;"></div>
<div class="sh" style="left:628px;top:745px;width:1px;height:20px;"></div>
<div class="t" style="top:748px;font-size:13px;left:648px;font-weight:bold;transform:scaleX(.925);transform-origin:0 0;">Microsoft Exc...</div>
<div class="a" style="left:744px;top:744px;width:113px;height:22px;background:#8499b3;border-top:1px solid #c5d0de;border-left:1px solid #c5d0de;border-right:1px solid #000;border-bottom:1px solid #000"></div>
<div class="sh" style="left:745px;top:764px;width:111px;height:1px;"></div>
<div class="sh" style="left:855px;top:745px;width:1px;height:20px;"></div>
<div class="t" style="top:748px;font-size:13px;left:767px;transform:scaleX(.85);transform-origin:0 0;">Документ2 - Mi...</div>
<div class="sk" style="left:865px;top:744px;width:157px;height:22px;"></div>
<div class="t" style="top:748px;font-size:13px;left:987px;transform:scaleX(.83);transform-origin:0 0;">14:09</div>
<svg style="left:0;top:0" width="1024" height="768" viewBox="0 0 1024 768" shape-rendering="crispEdges"><path d="M12.5 48.5H19.5L22.5 51.5V60.5H12.5Z" fill="#fff" stroke="#000" stroke-width="1"/><path d="M19.5 48.5V51.5H22.5" fill="none" stroke="#000" stroke-width="1"/><path d="M33.5 60.5V52.5L34.5 51.5H37.5L38.5 52.5H44.5V55.5H38.5L34.5 60.5Z" fill="#ffff60" stroke="#000" stroke-width="1"/><path d="M34.5 60.5L38.5 55.5H48.5L44.5 60.5Z" fill="#808000" stroke="#000" stroke-width="1"/><path d="M41.5 49.5C43 47.5 46 47.5 47.5 50.5M47.5 48V51.5H44.5" fill="none" stroke="#000" stroke-width="1" shape-rendering="auto"/><rect x="57" y="48" width="14" height="14" fill="#000"/><rect x="58" y="49" width="2" height="12" fill="#808000"/><rect x="60" y="49" width="9" height="6" fill="#c0c0c0"/><rect x="69" y="49" width="1" height="12" fill="#808000"/><rect x="60" y="55" width="9" height="1" fill="#808000"/><rect x="60" y="57" width="9" height="4" fill="#000"/><rect x="66" y="58" width="2" height="3" fill="#c0c0c0"/><rect x="60" y="56" width="9" height="1" fill="#808000"/><path d="M83.5 59.5V51.5L87.5 47.5H90.5L94.5 51.5V59.5Z" fill="#fff" stroke="#000" stroke-width="1" shape-rendering="auto"/><rect x="85" y="54" width="6" height="1" fill="#000080"/><rect x="91" y="52" width="2" height="2" fill="#a00000"/><rect x="79" y="56" width="13" height="7" fill="#000"/><rect x="80" y="57" width="11" height="5" fill="#fff"/><rect x="81" y="58" width="2" height="1" fill="#000"/><rect x="81" y="60" width="2" height="1" fill="#000"/><rect x="85" y="58" width="5" height="1" fill="#808080"/><rect x="85" y="60" width="5" height="1" fill="#808080"/><path d="M111.5 53.5L113.5 48.5H121.5L119.5 53.5Z" fill="#fff" stroke="#000" stroke-width="1" shape-rendering="auto"/><rect x="114" y="50" width="5" height="1" fill="#000"/><rect x="113" y="52" width="5" height="1" fill="#000"/><path d="M108.5 55.5L110.5 53.5H121.5L123.5 52.5V58.5L120.5 61.5H109.5L108.5 60.5Z" fill="#c0c0c0" stroke="#000" stroke-width="1" shape-rendering="auto"/><rect x="109" y="56" width="12" height="1" fill="#fff"/><rect x="109" y="59" width="12" height="1" fill="#000"/><rect x="109" y="60" width="11" height="1" fill="#fff"/><rect x="115" y="58" width="3" height="1" fill="#ff0"/><rect x="121" y="55" width="1" height="4" fill="#000"/><path d="M131.5 47.5H139.5L142.5 50.5V61.5H131.5Z" fill="#fff" stroke="#000" stroke-width="1"/><path d="M139.5 47.5V50.5H142.5" fill="none" stroke="#000" stroke-width="1"/><ellipse cx="141" cy="55.5" rx="3.5" ry="3.5" fill="#c0c0c0" stroke="#000" stroke-width="1" shape-rendering="auto"/><rect x="139" y="54" width="2" height="1" fill="#0ff"/><rect x="141" y="57" width="1" height="1" fill="#0ff"/><path d="M143.5 58.5L146.5 61.5" fill="none" stroke="#000" stroke-width="2" shape-rendering="auto"/><text x="154.5" y="53.5" fill="#000" text-anchor="start" style="font-family:'Liberation Sans';font-size:7px;" textLength="12.5" lengthAdjust="spacingAndGlyphs">АБВ</text><path d="M155.5 57L159.5 61L168 50.5" fill="none" stroke="#000080" stroke-width="1.8" shape-rendering="auto"/><path d="M160.8 61L169 51" fill="none" stroke="#fff" stroke-width="0.7" shape-rendering="auto"/><path d="M188 48L192.5 56M193 48L188.5 56" fill="none" stroke="#000" stroke-width="1.1" shape-rendering="auto"/><ellipse cx="188" cy="58.5" rx="1.7" ry="2.3" fill="none" stroke="#000080" stroke-width="1.2" shape-rendering="auto"/><ellipse cx="193" cy="58.5" rx="1.7" ry="2.3" fill="none" stroke="#000080" stroke-width="1.2" shape-rendering="auto"/><path d="M206.5 48.5H211.5L213.5 50.5V57.5H206.5Z" fill="#fff" stroke="#000" stroke-width="1"/><rect x="208" y="51" width="3" height="1" fill="#000"/><rect x="208" y="53" width="4" height="1" fill="#000"/><path d="M213.5 51.5H218.5L220.5 53.5V60.5H213.5Z" fill="#fff" stroke="#000080" stroke-width="1"/><rect x="215" y="54" width="3" height="1" fill="#000"/><rect x="215" y="56" width="4" height="1" fill="#000"/><rect x="215" y="58" width="4" height="1" fill="#000"/><rect x="229" y="49" width="12" height="12" fill="#000"/><rect x="230" y="50" width="10" height="10" fill="#77773a"/><path d="M233 50L235 48H237L239 50Z" fill="#ff0" stroke="#000" stroke-width="1" shape-rendering="auto"/><path d="M236.5 54.5H242.5L244.5 56.5V61.5H236.5Z" fill="#fff" stroke="#000080" stroke-width="1"/><rect x="238" y="57" width="3" height="1" fill="#000080"/><rect x="238" y="59" width="5" height="1" fill="#000080"/><path d="M263 50L266 47L268 49L265 52Z" fill="#000080" stroke="#000" stroke-width="0.5" shape-rendering="auto"/><path d="M253 53L260 49L265 54L258 60Z" fill="#fff" stroke="#000" stroke-width="1" shape-rendering="auto"/><path d="M258 50.5L263 55.5M260.5 49.5L265 54" fill="none" stroke="#ff0" stroke-width="1.5" shape-rendering="auto"/><path d="M252 61.5H256L259 59.5" fill="none" stroke="#ff0" stroke-width="1" shape-rendering="auto"/><path d="M286 54.5C288 51 291 50 293 51C295.5 52.5 295 56 293.5 58.5" fill="none" stroke="#000080" stroke-width="1.3" shape-rendering="auto"/><path d="M283 52V58H289Z" fill="#000080"/><path d="M328 55.5C326 52 323 51 321 52C318.5 53.5 319 57 320.5 59.5" fill="none" stroke="#c5d0de" stroke-width="1.3" shape-rendering="auto"/><path d="M331 53V59H325Z" fill="#c5d0de"/><path d="M327 54.5C325 51 322 50 320 51C317.5 52.5 318 56 319.5 58.5" fill="none" stroke="#52657f" stroke-width="1.3" shape-rendering="auto"/><path d="M330 52V58H324Z" fill="#52657f"/><ellipse cx="361" cy="52.5" rx="5.5" ry="5.5" fill="#0000e0" stroke="#000060" stroke-width="1" shape-rendering="auto"/><path d="M357.5 50C359 47.5 363 48 364.5 50.5C364 53 362 55.5 359.5 55C358 54 357.5 52 357.5 50Z" fill="#00a000"/><path d="M362 55L365 53.5L365.5 56Z" fill="#00a000"/><path d="M359.5 57.5H364.5Q366.5 59.5 364.5 61.5H359.5Q357.5 59.5 359.5 57.5Z" fill="#fff" stroke="#000" stroke-width="1.2" shape-rendering="auto"/><path d="M365.5 57.5H369.5Q371.5 59.5 369.5 61.5H365.5Q363.5 59.5 365.5 57.5Z" fill="#fff" stroke="#000" stroke-width="1.2" shape-rendering="auto"/><rect x="362" y="59" width="6" height="1" fill="#000"/><text x="379" y="61" fill="#000" text-anchor="start" style="font-family:'Liberation Serif';font-size:15px;">Σ</text><text x="403" y="59" fill="#000" text-anchor="start" style="font-family:'Liberation Serif';font-size:14px;font-weight:bold;font-style:italic;">f</text><text x="410" y="60" fill="#000" text-anchor="start" style="font-family:'Liberation Serif';font-size:9px;font-weight:bold;font-style:italic;">x</text><text x="425" y="54" fill="#000080" text-anchor="start" style="font-family:'Liberation Serif';font-size:9px;font-weight:bold;">А</text><text x="425" y="62" fill="#a00000" text-anchor="start" style="font-family:'Liberation Serif';font-size:9px;font-weight:bold;">Я</text><rect x="436" y="48" width="1" height="12" fill="#000"/><path d="M433.5 57H439.5L436.5 62Z" fill="#000"/><text x="448" y="54" fill="#a00000" text-anchor="start" style="font-family:'Liberation Serif';font-size:9px;font-weight:bold;">Я</text><text x="448" y="62" fill="#000080" text-anchor="start" style="font-family:'Liberation Serif';font-size:9px;font-weight:bold;">А</text><rect x="459" y="48" width="1" height="12" fill="#000"/><path d="M456.5 57H462.5L459.5 62Z" fill="#000"/><path d="M476.5 51.5L478.5 49.5V59.5H490.5V61.5H476.5Z" fill="#fff" stroke="#000" stroke-width="1"/><rect x="479" y="54" width="3" height="6" fill="#0000e0"/><rect x="483" y="49" width="3" height="11" fill="#ff0"/><rect x="487" y="51" width="3" height="9" fill="#f00"/><rect x="482" y="49" width="1" height="11" fill="#000"/><rect x="486" y="51" width="1" height="9" fill="#000"/><rect x="490" y="51" width="1" height="9" fill="#000"/><rect x="483" y="48" width="3" height="1" fill="#000"/><rect x="487" y="50" width="3" height="1" fill="#000"/><rect x="479" y="53" width="3" height="1" fill="#000"/><text x="498" y="61" fill="#000080" text-anchor="start" style="font-family:'Liberation Serif';font-size:12px;font-weight:bold;">A</text><path d="M504 50L507 47H512V53L509 56H504Z" fill="#ff0" stroke="#000" stroke-width="0.8" shape-rendering="auto"/><path d="M507 59C506 56 508 54 511 55L515 53V57L511 61C509 62 507 61 507 59Z" fill="#0ff" stroke="#008080" stroke-width="0.8" shape-rendering="auto"/><path d="M582.5 47.5H595.5V58.5H592.5L593.5 62.5L589.5 58.5H582.5Z" fill="#ffffc0" stroke="#000" stroke-width="1" shape-rendering="auto"/><text x="585" y="57" fill="#000080" text-anchor="start" style="font-family:'Liberation Sans';font-size:11px;font-weight:bold;">?</text><text x="187" y="85.5" fill="#000" text-anchor="start" style="font-family:'Liberation Serif';font-size:13px;font-weight:bold;">Ж</text><text x="210" y="85.5" fill="#000" text-anchor="start" style="font-family:'Liberation Serif';font-size:13px;font-weight:bold;font-style:italic;">К</text><text x="234" y="85" fill="#000" text-anchor="start" style="font-family:'Liberation Serif';font-size:13px;font-weight:bold;">Ч</text><rect x="234" y="86" width="10" height="1" fill="#000"/><rect x="260" y="75" width="14" height="1" fill="#000"/><rect x="283" y="75" width="14" height="1" fill="#000"/><rect x="306" y="75" width="14" height="1" fill="#000"/><rect x="260" y="77" width="10" height="1" fill="#000"/><rect x="285" y="77" width="10" height="1" fill="#000"/><rect x="310" y="77" width="10" height="1" fill="#000"/><rect x="260" y="79" width="14" height="1" fill="#000"/><rect x="283" y="79" width="14" height="1" fill="#000"/><rect x="306" y="79" width="14" height="1" fill="#000"/><rect x="260" y="81" width="10" height="1" fill="#000"/><rect x="285" y="81" width="10" height="1" fill="#000"/><rect x="310" y="81" width="10" height="1" fill="#000"/><rect x="260" y="83" width="14" height="1" fill="#000"/><rect x="283" y="83" width="14" height="1" fill="#000"/><rect x="306" y="83" width="14" height="1" fill="#000"/><rect x="260" y="85" width="10" height="1" fill="#000"/><rect x="285" y="85" width="10" height="1" fill="#000"/><rect x="310" y="85" width="10" height="1" fill="#000"/><rect x="329" y="73" width="16" height="15" fill="#000"/><rect x="330" y="74" width="6" height="2" fill="#fff"/><rect x="338" y="74" width="6" height="2" fill="#fff"/><rect x="330" y="85" width="6" height="2" fill="#fff"/><rect x="338" y="85" width="6" height="2" fill="#fff"/><rect x="330" y="77" width="14" height="7" fill="#fff"/><rect x="330" y="80" width="3" height="1" fill="#000"/><rect x="341" y="80" width="3" height="1" fill="#000"/><rect x="332" y="79" width="1" height="3" fill="#000"/><rect x="341" y="79" width="1" height="3" fill="#000"/><text x="337" y="83.5" fill="#000" text-anchor="middle" style="font-family:'Liberation Sans';font-size:8px;font-weight:bold;">a</text><rect x="358" y="74" width="15" height="8" fill="#008000"/><ellipse cx="365.5" cy="78" rx="5" ry="3" fill="#c0c0c0" stroke="#606060" stroke-width="0.8" shape-rendering="auto"/><text x="363" y="81" fill="#000" text-anchor="start" style="font-family:'Liberation Sans';font-size:7px;font-weight:bold;">9</text><rect x="367" y="77" width="3" height="7" fill="#e0e080"/><rect x="367" y="79" width="3" height="1" fill="#808000"/><rect x="367" y="81" width="3" height="1" fill="#808000"/><rect x="366" y="76" width="5" height="1" fill="#000"/><rect x="366" y="84" width="5" height="1" fill="#000"/><ellipse cx="361" cy="83.5" rx="2" ry="1.2" fill="#ff0" stroke="#000" stroke-width="0.6" shape-rendering="auto"/><ellipse cx="366.5" cy="86" rx="2" ry="1.2" fill="#ff0" stroke="#000" stroke-width="0.6" shape-rendering="auto"/><text x="382" y="86" fill="#000" text-anchor="start" style="font-family:'Liberation Sans';font-size:14px;font-weight:bold;">%</text><rect x="406" y="77" width="2" height="1" fill="#000"/><rect x="406" y="86" width="2" height="1" fill="#000"/><rect x="405" y="78" width="1" height="8" fill="#000"/><rect x="408" y="78" width="1" height="8" fill="#000"/><rect x="411" y="77" width="2" height="1" fill="#000"/><rect x="411" y="86" width="2" height="1" fill="#000"/><rect x="410" y="78" width="1" height="8" fill="#000"/><rect x="413" y="78" width="1" height="8" fill="#000"/><rect x="416" y="77" width="2" height="1" fill="#000"/><rect x="416" y="86" width="2" height="1" fill="#000"/><rect x="415" y="78" width="1" height="8" fill="#000"/><rect x="418" y="78" width="1" height="8" fill="#000"/><path d="M428 77L430.5 74.5V76.5H433V77.5H430.5V79.5Z" fill="#000080"/><rect x="435" y="79" width="1" height="2" fill="#000"/><rect x="438" y="74" width="2" height="1" fill="#000"/><rect x="438" y="79" width="2" height="1" fill="#000"/><rect x="437" y="75" width="1" height="4" fill="#000"/><rect x="440" y="75" width="1" height="4" fill="#000"/><rect x="430" y="86" width="1" height="2" fill="#000"/><rect x="433" y="81" width="2" height="1" fill="#000"/><rect x="433" y="86" width="2" height="1" fill="#000"/><rect x="432" y="82" width="1" height="4" fill="#000"/><rect x="435" y="82" width="1" height="4" fill="#000"/><rect x="438" y="81" width="2" height="1" fill="#000"/><rect x="438" y="86" width="2" height="1" fill="#000"/><rect x="437" y="82" width="1" height="4" fill="#000"/><rect x="440" y="82" width="1" height="4" fill="#000"/><rect x="453" y="79" width="1" height="2" fill="#000"/><rect x="456" y="74" width="2" height="1" fill="#000"/><rect x="456" y="79" width="2" height="1" fill="#000"/><rect x="455" y="75" width="1" height="4" fill="#000"/><rect x="458" y="75" width="1" height="4" fill="#000"/><rect x="461" y="74" width="2" height="1" fill="#000"/><rect x="461" y="79" width="2" height="1" fill="#000"/><rect x="460" y="75" width="1" height="4" fill="#000"/><rect x="463" y="75" width="1" height="4" fill="#000"/><path d="M455 84L452.5 81.5V83.5H450V84.5H452.5V86.5Z" fill="#000080"/><rect x="457" y="86" width="1" height="2" fill="#000"/><rect x="461" y="81" width="2" height="1" fill="#000"/><rect x="461" y="86" width="2" height="1" fill="#000"/><rect x="460" y="82" width="1" height="4" fill="#000"/><rect x="463" y="82" width="1" height="4" fill="#000"/><rect x="486" y="73" width="1" height="1" fill="#000"/><rect x="486" y="75" width="1" height="1" fill="#000"/><rect x="486" y="77" width="1" height="1" fill="#000"/><rect x="486" y="79" width="1" height="1" fill="#000"/><rect x="486" y="81" width="1" height="1" fill="#000"/><rect x="486" y="83" width="1" height="1" fill="#000"/><rect x="486" y="85" width="1" height="1" fill="#000"/><rect x="486" y="87" width="1" height="1" fill="#000"/><rect x="488" y="75" width="7" height="1" fill="#000"/><rect x="481" y="75" width="4" height="1" fill="#000"/><rect x="488" y="77" width="7" height="2" fill="#000"/><rect x="488" y="80" width="5" height="2" fill="#000"/><rect x="488" y="83" width="7" height="1" fill="#000"/><rect x="481" y="83" width="4" height="1" fill="#000"/><rect x="481" y="85" width="5" height="1" fill="#000"/><rect x="488" y="85" width="3" height="1" fill="#000"/><path d="M479 79.5L481.5 77V79H484V80H481.5V82Z" fill="#000080"/><rect x="509" y="73" width="1" height="1" fill="#000"/><rect x="509" y="75" width="1" height="1" fill="#000"/><rect x="509" y="77" width="1" height="1" fill="#000"/><rect x="509" y="79" width="1" height="1" fill="#000"/><rect x="509" y="81" width="1" height="1" fill="#000"/><rect x="509" y="83" width="1" height="1" fill="#000"/><rect x="509" y="85" width="1" height="1" fill="#000"/><rect x="509" y="87" width="1" height="1" fill="#000"/><rect x="511" y="75" width="7" height="1" fill="#000"/><rect x="504" y="75" width="4" height="1" fill="#000"/><rect x="511" y="77" width="7" height="2" fill="#000"/><rect x="511" y="80" width="5" height="2" fill="#000"/><rect x="511" y="83" width="7" height="1" fill="#000"/><rect x="504" y="83" width="4" height="1" fill="#000"/><rect x="504" y="85" width="5" height="1" fill="#000"/><rect x="511" y="85" width="3" height="1" fill="#000"/><path d="M507 79.5L504.5 77V79H502V80H504.5V82Z" fill="#000080"/><path d="M534.5 77.5H538.5V75L543.5 80L538.5 85V82.5H534.5Z" fill="#008080" stroke="#000" stroke-width="1" shape-rendering="auto"/><path d="M565.5 77.5H561.5V75L556.5 80L561.5 85V82.5H565.5Z" fill="#008080" stroke="#000" stroke-width="1" shape-rendering="auto"/><rect x="579" y="75" width="1" height="1" fill="#9a8f8a"/><rect x="579" y="81" width="1" height="1" fill="#9a8f8a"/><rect x="579" y="87" width="1" height="1" fill="#9a8f8a"/><rect x="579" y="75" width="1" height="1" fill="#9a8f8a"/><rect x="585" y="75" width="1" height="1" fill="#9a8f8a"/><rect x="591" y="75" width="1" height="1" fill="#9a8f8a"/><rect x="581" y="75" width="1" height="1" fill="#9a8f8a"/><rect x="581" y="81" width="1" height="1" fill="#9a8f8a"/><rect x="581" y="87" width="1" height="1" fill="#9a8f8a"/><rect x="579" y="77" width="1" height="1" fill="#9a8f8a"/><rect x="585" y="77" width="1" height="1" fill="#9a8f8a"/><rect x="591" y="77" width="1" height="1" fill="#9a8f8a"/><rect x="583" y="75" width="1" height="1" fill="#9a8f8a"/><rect x="583" y="81" width="1" height="1" fill="#9a8f8a"/><rect x="583" y="87" width="1" height="1" fill="#9a8f8a"/><rect x="579" y="79" width="1" height="1" fill="#9a8f8a"/><rect x="585" y="79" width="1" height="1" fill="#9a8f8a"/><rect x="591" y="79" width="1" height="1" fill="#9a8f8a"/><rect x="585" y="75" width="1" height="1" fill="#9a8f8a"/><rect x="585" y="81" width="1" height="1" fill="#9a8f8a"/><rect x="585" y="87" width="1" height="1" fill="#9a8f8a"/><rect x="579" y="81" width="1" height="1" fill="#9a8f8a"/><rect x="585" y="81" width="1" height="1" fill="#9a8f8a"/><rect x="591" y="81" width="1" height="1" fill="#9a8f8a"/><rect x="587" y="75" width="1" height="1" fill="#9a8f8a"/><rect x="587" y="81" width="1" height="1" fill="#9a8f8a"/><rect x="587" y="87" width="1" height="1" fill="#9a8f8a"/><rect x="579" y="83" width="1" height="1" fill="#9a8f8a"/><rect x="585" y="83" width="1" height="1" fill="#9a8f8a"/><rect x="591" y="83" width="1" height="1" fill="#9a8f8a"/><rect x="589" y="75" width="1" height="1" fill="#9a8f8a"/><rect x="589" y="81" width="1" height="1" fill="#9a8f8a"/><rect x="589" y="87" width="1" height="1" fill="#9a8f8a"/><rect x="579" y="85" width="1" height="1" fill="#9a8f8a"/><rect x="585" y="85" width="1" height="1" fill="#9a8f8a"/><rect x="591" y="85" width="1" height="1" fill="#9a8f8a"/><rect x="591" y="75" width="1" height="1" fill="#9a8f8a"/><rect x="591" y="81" width="1" height="1" fill="#9a8f8a"/><rect x="591" y="87" width="1" height="1" fill="#9a8f8a"/><rect x="579" y="87" width="1" height="1" fill="#9a8f8a"/><rect x="585" y="87" width="1" height="1" fill="#9a8f8a"/><rect x="591" y="87" width="1" height="1" fill="#9a8f8a"/><path d="M613.5 80.5L619.5 74.5L625.5 80.5L619.5 85Z" fill="#fff" stroke="#000" stroke-width="0.8" shape-rendering="auto"/><path d="M616 82L620 84L623 81L619.5 85Z" fill="#808080"/><path d="M617.5 78V74.5C617.5 72.5 620.5 72.5 620.5 74.5" fill="none" stroke="#000080" stroke-width="1" shape-rendering="auto"/><path d="M624 77C626.5 78 626.5 81 625.5 82.5C624.5 80 623.5 79 622.5 78.5Z" fill="#000080"/><rect x="611" y="85" width="16" height="4" fill="#ff0"/><text x="653" y="84" fill="#000080" text-anchor="middle" style="font-family:'Liberation Serif';font-size:16px;">A</text><rect x="645" y="85" width="16" height="4" fill="#f00"/><path d="M83.5 700.5V713.5L86.5 710.5L88.5 715.5L90.5 714.5L88.5 709.5H92.5Z" fill="#fff" stroke="#000" stroke-width="1" shape-rendering="auto"/><path d="M109 704A5 5 0 1 0 114.5 706.5" fill="none" stroke="#5a6c86" stroke-width="2.6" shape-rendering="auto"/><path d="M108 699.5L114 703.5L108 707Z" fill="#5a6c86"/><ellipse cx="110" cy="709" rx="1.3" ry="1.3" fill="#5a6c86" stroke="#5a6c86" stroke-width="0.5" shape-rendering="auto"/><path d="M105.5 713C107 716 112 716.5 114.5 714" fill="none" stroke="#c5d0de" stroke-width="1" shape-rendering="auto"/><path d="M214 702L225 713" fill="none" stroke="#000" stroke-width="1" shape-rendering="auto"/><path d="M238 702L248 712" fill="none" stroke="#000" stroke-width="1" shape-rendering="auto"/><path d="M249.5 713.5L243.5 711.5L247.5 707.5Z" fill="#000"/><path d="M258.5 701.5H273.5V713.5H258.5Z" fill="none" stroke="#000" stroke-width="1"/><ellipse cx="289" cy="707.5" rx="7.5" ry="5.5" fill="none" stroke="#000" stroke-width="1" shape-rendering="auto"/><rect x="305" y="701" width="14" height="14" fill="#808080"/><rect x="304" y="700" width="14" height="14" fill="#000"/><rect x="305" y="701" width="12" height="12" fill="#fff"/><path d="M307 706L309.5 702L312 706Z" fill="#000"/><rect x="313" y="703" width="3" height="1" fill="#000"/><rect x="313" y="705" width="3" height="1" fill="#000"/><rect x="306" y="707" width="10" height="1" fill="#000"/><rect x="306" y="709" width="10" height="1" fill="#000"/><rect x="306" y="711" width="10" height="1" fill="#000"/><text x="325" y="715" fill="#0000c0" text-anchor="start" style="font-family:'Liberation Serif';font-size:18px;font-weight:bold;font-style:italic;">A</text><path d="M339.5 701V712C339.5 713 341 714 342 713" fill="none" stroke="#707070" stroke-width="1.5" shape-rendering="auto"/><rect x="351" y="700" width="15" height="15" fill="#fff"/><rect x="351" y="700" width="1" height="1" fill="#000"/><rect x="351" y="714" width="1" height="1" fill="#000"/><rect x="351" y="700" width="1" height="1" fill="#000"/><rect x="365" y="700" width="1" height="1" fill="#000"/><rect x="353" y="700" width="1" height="1" fill="#000"/><rect x="353" y="714" width="1" height="1" fill="#000"/><rect x="351" y="702" width="1" height="1" fill="#000"/><rect x="365" y="702" width="1" height="1" fill="#000"/><rect x="355" y="700" width="1" height="1" fill="#000"/><rect x="355" y="714" width="1" height="1" fill="#000"/><rect x="351" y="704" width="1" height="1" fill="#000"/><rect x="365" y="704" width="1" height="1" fill="#000"/><rect x="357" y="700" width="1" height="1" fill="#000"/><rect x="357" y="714" width="1" height="1" fill="#000"/><rect x="351" y="706" width="1" height="1" fill="#000"/><rect x="365" y="706" width="1" height="1" fill="#000"/><rect x="359" y="700" width="1" height="1" fill="#000"/><rect x="359" y="714" width="1" height="1" fill="#000"/><rect x="351" y="708" width="1" height="1" fill="#000"/><rect x="365" y="708" width="1" height="1" fill="#000"/><rect x="361" y="700" width="1" height="1" fill="#000"/><rect x="361" y="714" width="1" height="1" fill="#000"/><rect x="351" y="710" width="1" height="1" fill="#000"/><rect x="365" y="710" width="1" height="1" fill="#000"/><rect x="363" y="700" width="1" height="1" fill="#000"/><rect x="363" y="714" width="1" height="1" fill="#000"/><rect x="351" y="712" width="1" height="1" fill="#000"/><rect x="365" y="712" width="1" height="1" fill="#000"/><rect x="365" y="700" width="1" height="1" fill="#000"/><rect x="365" y="714" width="1" height="1" fill="#000"/><rect x="351" y="714" width="1" height="1" fill="#000"/><rect x="365" y="714" width="1" height="1" fill="#000"/><path d="M355 706C354 702 361 701 361.5 705L361 708H355.5Z" fill="#a00000"/><ellipse cx="358" cy="707" rx="2" ry="2.5" fill="#ffd0a0" stroke="#000" stroke-width="0.5" shape-rendering="auto"/><path d="M354 714L356 710.5H360L362.5 714Z" fill="#c000c0" stroke="#000" stroke-width="0.5" shape-rendering="auto"/><rect x="357" y="709" width="2" height="3" fill="#ff0"/><path d="M381.5 707.5L387.5 701.5L393.5 707.5L387.5 712Z" fill="#fff" stroke="#000" stroke-width="0.8" shape-rendering="auto"/><path d="M384 709L388 711L391 708L387.5 712Z" fill="#808080"/><path d="M385.5 705V701.5C385.5 699.5 388.5 699.5 388.5 701.5" fill="none" stroke="#000080" stroke-width="1" shape-rendering="auto"/><path d="M392 704C394.5 705 394.5 708 393.5 709.5C392.5 707 391.5 706 390.5 705.5Z" fill="#000080"/><rect x="379" y="712" width="16" height="4" fill="#ff0"/><path d="M418 710L425 701L427.5 703L420.5 711Z" fill="#fff" stroke="#000080" stroke-width="1" shape-rendering="auto"/><path d="M419 709.5L423 704.5L425 706L420.5 711Z" fill="#000080"/><path d="M425 701L427 699.5L429 700L427.5 703Z" fill="#ff0"/><rect x="413" y="709" width="4" height="2" fill="#008080"/><rect x="413" y="712" width="16" height="4" fill="#0000e0"/><text x="455" y="711" fill="#000080" text-anchor="middle" style="font-family:'Liberation Serif';font-size:16px;">A</text><rect x="447" y="712" width="16" height="4" fill="#f00"/><rect x="481" y="702" width="15" height="1" fill="#000"/><rect x="481" y="705" width="15" height="2" fill="#000"/><rect x="481" y="709" width="15" height="3" fill="#000"/><rect x="504" y="702" width="15" height="1" fill="#000"/><rect x="504" y="705" width="3" height="1" fill="#000"/><rect x="508" y="705" width="3" height="1" fill="#000"/><rect x="512" y="705" width="3" height="1" fill="#000"/><rect x="516" y="705" width="3" height="1" fill="#000"/><rect x="504" y="708" width="2" height="1" fill="#000"/><rect x="507" y="708" width="2" height="1" fill="#000"/><rect x="510" y="708" width="2" height="1" fill="#000"/><rect x="513" y="708" width="2" height="1" fill="#000"/><rect x="516" y="708" width="2" height="1" fill="#000"/><rect x="504" y="711" width="5" height="1" fill="#000"/><rect x="510" y="711" width="2" height="1" fill="#000"/><rect x="513" y="711" width="5" height="1" fill="#000"/><rect x="529" y="702" width="13" height="1" fill="#000"/><path d="M542 700L545 702.5L542 705Z" fill="#000"/><rect x="531" y="707" width="14" height="1" fill="#000"/><path d="M531 704.5L528 707.5L531 710.5Z" fill="#000"/><rect x="531" y="712" width="11" height="1" fill="#000"/><path d="M531 709.5L528 712.5L531 715.5ZM542 709.5L545 712.5L542 715.5Z" fill="#000"/><rect x="554" y="703" width="1" height="1" fill="#000"/><rect x="556" y="703" width="1" height="1" fill="#000"/><rect x="558" y="703" width="1" height="1" fill="#000"/><rect x="560" y="703" width="1" height="1" fill="#000"/><rect x="562" y="703" width="1" height="1" fill="#000"/><rect x="553" y="704" width="1" height="1" fill="#000"/><rect x="555" y="704" width="1" height="1" fill="#000"/><rect x="557" y="704" width="1" height="1" fill="#000"/><rect x="559" y="704" width="1" height="1" fill="#000"/><rect x="561" y="704" width="1" height="1" fill="#000"/><rect x="563" y="704" width="1" height="1" fill="#000"/><rect x="554" y="705" width="1" height="1" fill="#000"/><rect x="556" y="705" width="1" height="1" fill="#000"/><rect x="558" y="705" width="1" height="1" fill="#000"/><rect x="560" y="705" width="1" height="1" fill="#000"/><rect x="562" y="705" width="1" height="1" fill="#000"/><rect x="553" y="706" width="1" height="1" fill="#000"/><rect x="555" y="706" width="1" height="1" fill="#000"/><rect x="557" y="706" width="1" height="1" fill="#000"/><rect x="559" y="706" width="1" height="1" fill="#000"/><rect x="561" y="706" width="1" height="1" fill="#000"/><rect x="563" y="706" width="1" height="1" fill="#000"/><rect x="554" y="707" width="1" height="1" fill="#000"/><rect x="556" y="707" width="1" height="1" fill="#000"/><rect x="558" y="707" width="1" height="1" fill="#000"/><rect x="560" y="707" width="1" height="1" fill="#000"/><rect x="562" y="707" width="1" height="1" fill="#000"/><rect x="553" y="708" width="1" height="1" fill="#000"/><rect x="555" y="708" width="1" height="1" fill="#000"/><rect x="557" y="708" width="1" height="1" fill="#000"/><rect x="559" y="708" width="1" height="1" fill="#000"/><rect x="561" y="708" width="1" height="1" fill="#000"/><rect x="563" y="708" width="1" height="1" fill="#000"/><rect x="554" y="709" width="1" height="1" fill="#000"/><rect x="556" y="709" width="1" height="1" fill="#000"/><rect x="558" y="709" width="1" height="1" fill="#000"/><rect x="560" y="709" width="1" height="1" fill="#000"/><rect x="562" y="709" width="1" height="1" fill="#000"/><rect x="553" y="710" width="1" height="1" fill="#000"/><rect x="555" y="710" width="1" height="1" fill="#000"/><rect x="557" y="710" width="1" height="1" fill="#000"/><rect x="559" y="710" width="1" height="1" fill="#000"/><rect x="561" y="710" width="1" height="1" fill="#000"/><rect x="563" y="710" width="1" height="1" fill="#000"/><rect x="554" y="711" width="1" height="1" fill="#000"/><rect x="556" y="711" width="1" height="1" fill="#000"/><rect x="558" y="711" width="1" height="1" fill="#000"/><rect x="560" y="711" width="1" height="1" fill="#000"/><rect x="562" y="711" width="1" height="1" fill="#000"/><rect x="553" y="712" width="1" height="1" fill="#000"/><rect x="555" y="712" width="1" height="1" fill="#000"/><rect x="557" y="712" width="1" height="1" fill="#000"/><rect x="559" y="712" width="1" height="1" fill="#000"/><rect x="561" y="712" width="1" height="1" fill="#000"/><rect x="563" y="712" width="1" height="1" fill="#000"/><rect x="554" y="713" width="1" height="1" fill="#000"/><rect x="556" y="713" width="1" height="1" fill="#000"/><rect x="558" y="713" width="1" height="1" fill="#000"/><rect x="560" y="713" width="1" height="1" fill="#000"/><rect x="562" y="713" width="1" height="1" fill="#000"/><rect x="553" y="714" width="1" height="1" fill="#000"/><rect x="555" y="714" width="1" height="1" fill="#000"/><rect x="557" y="714" width="1" height="1" fill="#000"/><rect x="559" y="714" width="1" height="1" fill="#000"/><rect x="561" y="714" width="1" height="1" fill="#000"/><rect x="563" y="714" width="1" height="1" fill="#000"/><rect x="551" y="701" width="11" height="11" fill="#000"/><rect x="552" y="702" width="9" height="9" fill="#008080"/><path d="M573.5 705.5L578.5 700.5H588.5V709.5L583.5 714.5" fill="#e8e8e8" stroke="#808080" stroke-width="1" shape-rendering="auto"/><path d="M583.5 705.5L588.5 700.5V709.5L583.5 714.5Z" fill="#c0c0c0" stroke="#808080" stroke-width="0.6" shape-rendering="auto"/><rect x="573" y="705" width="11" height="10" fill="#000"/><rect x="574" y="706" width="9" height="8" fill="#008080"/><rect x="2" y="1" width="16" height="16" fill="#fff"/><path d="M2.5 1.5H17.5V16.5H2.5Z" fill="none" stroke="#008000" stroke-width="1" stroke-dasharray="1 1"/><path d="M3.5 2.5H16.5V15.5H3.5Z" fill="none" stroke="#008000" stroke-width="1" stroke-dasharray="1 1" stroke-dashoffset="1"/><path d="M6 5L14 13M14 5L6 13" fill="none" stroke="#0a8a0a" stroke-width="3" shape-rendering="auto"/><path d="M6.5 5L14.5 13" fill="none" stroke="#fff" stroke-width="0.8" shape-rendering="auto"/><rect x="13" y="13" width="3" height="1" fill="#008000"/><path d="M12.5 22.5H20.5L23.5 25.5V37.5H12.5Z" fill="#fff" stroke="#808080" stroke-width="1"/><path d="M20.5 22.5V25.5H23.5" fill="none" stroke="#000" stroke-width="1"/><path d="M23.5 25.5V37.5H12.5" fill="none" stroke="#000" stroke-width="1"/><path d="M20.5 22.5L23.5 25.5" fill="none" stroke="#000" stroke-width="1" shape-rendering="auto"/><rect x="18" y="28" width="3" height="1" fill="#c0c0c0"/><rect x="18" y="30" width="3" height="1" fill="#c0c0c0"/><rect x="18" y="32" width="3" height="1" fill="#c0c0c0"/><rect x="8" y="24" width="10" height="10" fill="#008000"/><rect x="9" y="25" width="8" height="8" fill="#fff"/><path d="M10.5 26.5L15.5 31.5M15.5 26.5L10.5 31.5" fill="none" stroke="#008000" stroke-width="2" shape-rendering="auto"/><path d="M10 748C13 746 16 746 21 748V761C16 759 13 759 10 761Z" fill="#000"/><rect x="12" y="750" width="3" height="4" fill="#f00"/><rect x="16" y="750" width="3" height="4" fill="#0c0"/><rect x="12" y="755" width="3" height="4" fill="#00f"/><rect x="16" y="755" width="3" height="4" fill="#ff0"/><rect x="5" y="749" width="1" height="1" fill="#000"/><rect x="5" y="759" width="1" height="1" fill="#000"/><rect x="5" y="752" width="1" height="2" fill="#f00"/><rect x="5" y="755" width="1" height="2" fill="#00f"/><rect x="7" y="750" width="3" height="1" fill="#000"/><rect x="7" y="758" width="3" height="1" fill="#000"/><rect x="7" y="752" width="3" height="2" fill="#f00"/><rect x="7" y="755" width="3" height="2" fill="#00f"/><rect x="74" y="749" width="15" height="13" fill="#1a6ab8"/><ellipse cx="81" cy="756" rx="6.5" ry="5" fill="#f0ecc0" stroke="#806000" stroke-width="0.6" shape-rendering="auto"/><rect x="78" y="754" width="5" height="6" fill="#fff"/><path d="M78.5 754.5H82.5V759.5H78.5Z" fill="none" stroke="#000" stroke-width="1"/><path d="M81 755L87 748" fill="none" stroke="#f0a000" stroke-width="2" shape-rendering="auto"/><path d="M86.5 748.5L88 747" fill="none" stroke="#e00000" stroke-width="2" shape-rendering="auto"/><rect x="74" y="762" width="15" height="1" fill="#000"/><rect x="97" y="750" width="10" height="10" fill="#fff"/><path d="M102 760L110 748" fill="none" stroke="#70a030" stroke-width="4" shape-rendering="auto"/><path d="M101 760L104 756" fill="none" stroke="#e06000" stroke-width="2" shape-rendering="auto"/><path d="M109 750L111 747" fill="none" stroke="#203060" stroke-width="2" shape-rendering="auto"/><path d="M128 748V762M122 751L134 759M134 751L122 759" fill="none" stroke="#f4f4f0" stroke-width="5" shape-rendering="auto"/><path d="M128 749V761M123 752L133 758M133 752L123 758" fill="none" stroke="#20a8b0" stroke-width="3" shape-rendering="auto"/><path d="M145 757L150 749L156 760" fill="none" stroke="#1030e0" stroke-width="2.2" shape-rendering="auto"/><path d="M145 757H153M152 754L156 760H149" fill="none" stroke="#404000" stroke-width="2" shape-rendering="auto"/><path d="M166.5 750.5Q166.5 747.5 169.5 747.5H178.5Q181.5 747.5 181.5 750.5V759.5Q181.5 762.5 178.5 762.5H169.5Q166.5 762.5 166.5 759.5Z" fill="#fff" stroke="#e00000" stroke-width="1.2" shape-rendering="auto"/><path d="M168 758A6 7 0 0 1 180 758Z" fill="#ff9020"/><ellipse cx="174" cy="755" rx="1.5" ry="1.5" fill="#ffe080" stroke="#ffe080" stroke-width="0.1" shape-rendering="auto"/><rect x="168" y="759" width="12" height="2" fill="#90c0f0"/><path d="M189 755L195 749Q201 748 203 754L205 752V759L203 757Q200 762 195 760Z" fill="#e08050" stroke="#806040" stroke-width="0.6" shape-rendering="auto"/><rect x="195" y="750" width="2" height="10" fill="#fff"/><rect x="199" y="750" width="2" height="10" fill="#fff"/><rect x="213" y="751" width="14" height="9" fill="#000"/><rect x="214" y="752" width="12" height="7" fill="#ffffd0"/><rect x="224" y="753" width="2" height="2" fill="#e00000"/><path d="M216 752C217 747 222 747 222 750M224 759C223 764 218 764 218 761" fill="none" stroke="#2060ff" stroke-width="2" shape-rendering="auto"/><rect x="235" y="747" width="16" height="16" fill="#c8c8f0"/><path d="M235.5 747.5H250.5V762.5H235.5Z" fill="none" stroke="#4040e0" stroke-width="1"/><text x="243" y="757" fill="#e0d000" text-anchor="middle" style="font-family:'Liberation Serif';font-size:9px;font-weight:bold;">WI</text><rect x="238" y="758" width="10" height="3" fill="#a0a0d8"/><ellipse cx="266" cy="755" rx="7.5" ry="7.5" fill="#fff" stroke="#c00000" stroke-width="1.2" shape-rendering="auto"/><ellipse cx="266" cy="755" rx="5.5" ry="5.5" fill="#a00000" stroke="#a00000" stroke-width="0.5" shape-rendering="auto"/><path d="M262 758Q263 753 266 751Q269 753 270 758Q266 761 262 758Z" fill="#ff9000"/><path d="M263.5 758.5Q266 755 268.5 758.5Q266 760 263.5 758.5Z" fill="#ffe060"/><rect x="281" y="747" width="16" height="16" fill="#000"/><path d="M282 748H296V754Q289 748 282 755Z" fill="#20c020"/><path d="M282 757Q288 751 296 756V762H284Q282 760 282 757Z" fill="#e8e8e8"/><ellipse cx="287" cy="757" rx="2.5" ry="2.5" fill="#404040" stroke="#808080" stroke-width="0.8" shape-rendering="auto"/><path d="M314 747L306 755H311L307 763L318 753H313L317 747Z" fill="#ff8000" stroke="#603000" stroke-width="0.6" shape-rendering="auto"/><rect x="327" y="756" width="9" height="3" fill="#f0e090"/><rect x="327" y="753" width="9" height="3" fill="#2080c0"/><path d="M327 750H335L340 754" fill="none" stroke="#2080c0" stroke-width="1.5" shape-rendering="auto"/><path d="M327 748H334" fill="none" stroke="#406080" stroke-width="1.2" shape-rendering="auto"/><rect x="327" y="759" width="9" height="1" fill="#404040"/><rect x="335" y="753" width="8" height="9" fill="#000030"/><rect x="336" y="754" width="6" height="7" fill="#fff"/><rect x="337" y="755" width="4" height="1" fill="#000"/><rect x="337" y="757" width="4" height="1" fill="#000"/><rect x="337" y="759" width="4" height="1" fill="#000"/><rect x="350" y="747" width="16" height="16" fill="#fff"/><path d="M350.5 747.5H365.5V762.5H350.5Z" fill="none" stroke="#008000" stroke-width="1" stroke-dasharray="1 1"/><path d="M351.5 748.5H364.5V761.5H351.5Z" fill="none" stroke="#008000" stroke-width="1" stroke-dasharray="1 1" stroke-dashoffset="1"/><path d="M354 751L362 759M362 751L354 759" fill="none" stroke="#0a8a0a" stroke-width="3" shape-rendering="auto"/><path d="M354.5 751L362.5 759" fill="none" stroke="#fff" stroke-width="0.8" shape-rendering="auto"/><rect x="361" y="759" width="3" height="1" fill="#008000"/><rect x="373" y="747" width="16" height="16" fill="#fff"/><path d="M374 748H388V762H374Z" fill="none" stroke="#900050" stroke-width="2"/><ellipse cx="383.5" cy="752.5" rx="2.5" ry="2.5" fill="none" stroke="#900050" stroke-width="1.6" shape-rendering="auto"/><path d="M382 754L377 759M378.5 757.5L380 759" fill="none" stroke="#900050" stroke-width="1.6" shape-rendering="auto"/><rect x="396" y="747" width="16" height="16" fill="#0000a0"/><rect x="398" y="749" width="12" height="12" fill="#fff"/><rect x="398" y="749" width="12" height="2" fill="#0000a0"/><rect x="399" y="750" width="10" height="1" fill="#fff"/><text x="404" y="760" fill="#000080" text-anchor="middle" style="font-family:'Liberation Sans';font-size:10px;font-weight:bold;">W</text><rect x="420" y="749" width="13" height="10" fill="#e0e0d8"/><rect x="421" y="750" width="11" height="8" fill="#e07000"/><path d="M421 750H427L421 756Z" fill="#e02020"/><path d="M432 750V754L428 758H425Z" fill="#ffd000"/><path d="M423 758L431 750" fill="none" stroke="#000" stroke-width="1.3" shape-rendering="auto"/><rect x="423" y="759" width="7" height="2" fill="#d0d0c8"/><rect x="421" y="761" width="11" height="1" fill="#b0b0a8"/><rect x="442" y="750" width="15" height="11" fill="#004048"/><path d="M442.5 750.5H456.5V760.5H442.5Z" fill="none" stroke="#20e0e0" stroke-width="1" stroke-dasharray="1 1"/><rect x="444" y="752" width="11" height="3" fill="#fff"/><rect x="444" y="756" width="2" height="1" fill="#fff"/><rect x="444" y="758" width="2" height="1" fill="#fff"/><rect x="447" y="756" width="2" height="1" fill="#fff"/><rect x="447" y="758" width="2" height="1" fill="#fff"/><rect x="450" y="756" width="2" height="1" fill="#fff"/><rect x="450" y="758" width="2" height="1" fill="#fff"/><rect x="453" y="756" width="2" height="1" fill="#fff"/><rect x="453" y="758" width="2" height="1" fill="#fff"/><rect x="442" y="761" width="15" height="1" fill="#000040"/><path d="M465 748H481L473 761Z" fill="#20b020"/><path d="M468 749H478L473 753Z" fill="#70e070"/><path d="M473 753L478 749L481 748L473 761Z" fill="#109010"/><path d="M518.5 748.5H526.5L529.5 751.5V762.5H518.5Z" fill="#fff" stroke="#000" stroke-width="1"/><path d="M526.5 748.5V751.5H529.5" fill="none" stroke="#000" stroke-width="1"/><rect x="524" y="754" width="4" height="1" fill="#c0c0c0"/><rect x="524" y="756" width="4" height="1" fill="#c0c0c0"/><rect x="522" y="759" width="6" height="1" fill="#c0c0c0"/><rect x="514" y="749" width="10" height="9" fill="#fff"/><path d="M514.5 749.5H523.5V757.5H514.5Z" fill="none" stroke="#0000c0" stroke-width="1" stroke-dasharray="1 1"/><text x="519" y="757" fill="#000080" text-anchor="middle" style="font-family:'Liberation Sans';font-size:8px;font-weight:bold;">W</text><rect x="630" y="748" width="15" height="15" fill="#fff"/><path d="M630.5 748.5H644.5V762.5H630.5Z" fill="none" stroke="#008000" stroke-width="1" stroke-dasharray="1 1"/><path d="M631.5 749.5H643.5V761.5H631.5Z" fill="none" stroke="#008000" stroke-width="1" stroke-dasharray="1 1" stroke-dashoffset="1"/><path d="M634 752L641 759M641 752L634 759" fill="none" stroke="#0a8a0a" stroke-width="3" shape-rendering="auto"/><path d="M634.5 752L641.5 759" fill="none" stroke="#fff" stroke-width="0.8" shape-rendering="auto"/><rect x="640" y="759" width="3" height="1" fill="#008000"/><path d="M751.5 748.5H759.5L762.5 751.5V762.5H751.5Z" fill="#fff" stroke="#000" stroke-width="1"/><path d="M759.5 748.5V751.5H762.5" fill="none" stroke="#000" stroke-width="1"/><rect x="757" y="754" width="4" height="1" fill="#c0c0c0"/><rect x="757" y="756" width="4" height="1" fill="#c0c0c0"/><rect x="755" y="759" width="6" height="1" fill="#c0c0c0"/><rect x="747" y="749" width="10" height="9" fill="#fff"/><path d="M747.5 749.5H756.5V757.5H747.5Z" fill="none" stroke="#0000c0" stroke-width="1" stroke-dasharray="1 1"/><text x="752" y="757" fill="#000080" text-anchor="middle" style="font-family:'Liberation Sans';font-size:8px;font-weight:bold;">W</text><path d="M870 754H873L878 749V763L873 758H870Z" fill="#ffff40" stroke="#404000" stroke-width="0.8" shape-rendering="auto"/><path d="M880 752L883 750M880 756H884M880 760L883 762" fill="none" stroke="#a0a0a0" stroke-width="1" shape-rendering="auto"/><rect x="890" y="749" width="9" height="7" fill="#000"/><rect x="891" y="750" width="7" height="5" fill="#40c0c0"/><rect x="888" y="757" width="13" height="3" fill="#e0e0e0"/><path d="M888.5 757.5H900.5V759.5H888.5Z" fill="none" stroke="#000" stroke-width="1"/><rect x="889" y="761" width="12" height="1" fill="#000"/><path d="M897 757L903 763M903 757L897 763" fill="none" stroke="#f00000" stroke-width="1.8" shape-rendering="auto"/><path d="M906 748H910V754L915 748H920L914 755L921 763H916L910 756V763H906Z" fill="#e00000"/><path d="M913 756L921 764H915L911 759Z" fill="#000"/><rect x="923" y="747" width="16" height="8" fill="#0030e8"/><rect x="923" y="755" width="16" height="8" fill="#ffee20"/><rect x="941" y="747" width="16" height="16" fill="#808080"/><text x="949" y="760" fill="#fff" text-anchor="middle" style="font-family:'Liberation Sans';font-size:11px;">UK</text><ellipse cx="963" cy="752" rx="2" ry="2.3" fill="#30b0f0" stroke="#002060" stroke-width="0.8" shape-rendering="auto"/><ellipse cx="968" cy="750" rx="2" ry="2.3" fill="#30b0f0" stroke="#002060" stroke-width="0.8" shape-rendering="auto"/><ellipse cx="973" cy="752" rx="2" ry="2.3" fill="#30b0f0" stroke="#002060" stroke-width="0.8" shape-rendering="auto"/><ellipse cx="961" cy="757" rx="2" ry="2.3" fill="#30b0f0" stroke="#002060" stroke-width="0.8" shape-rendering="auto"/><ellipse cx="967.5" cy="759" rx="3.5" ry="3.5" fill="#30b0f0" stroke="#002060" stroke-width="0.8" shape-rendering="auto"/><ellipse cx="973" cy="757" rx="1.8" ry="2" fill="#30b0f0" stroke="#002060" stroke-width="0.8" shape-rendering="auto"/></svg>
</body></html>
